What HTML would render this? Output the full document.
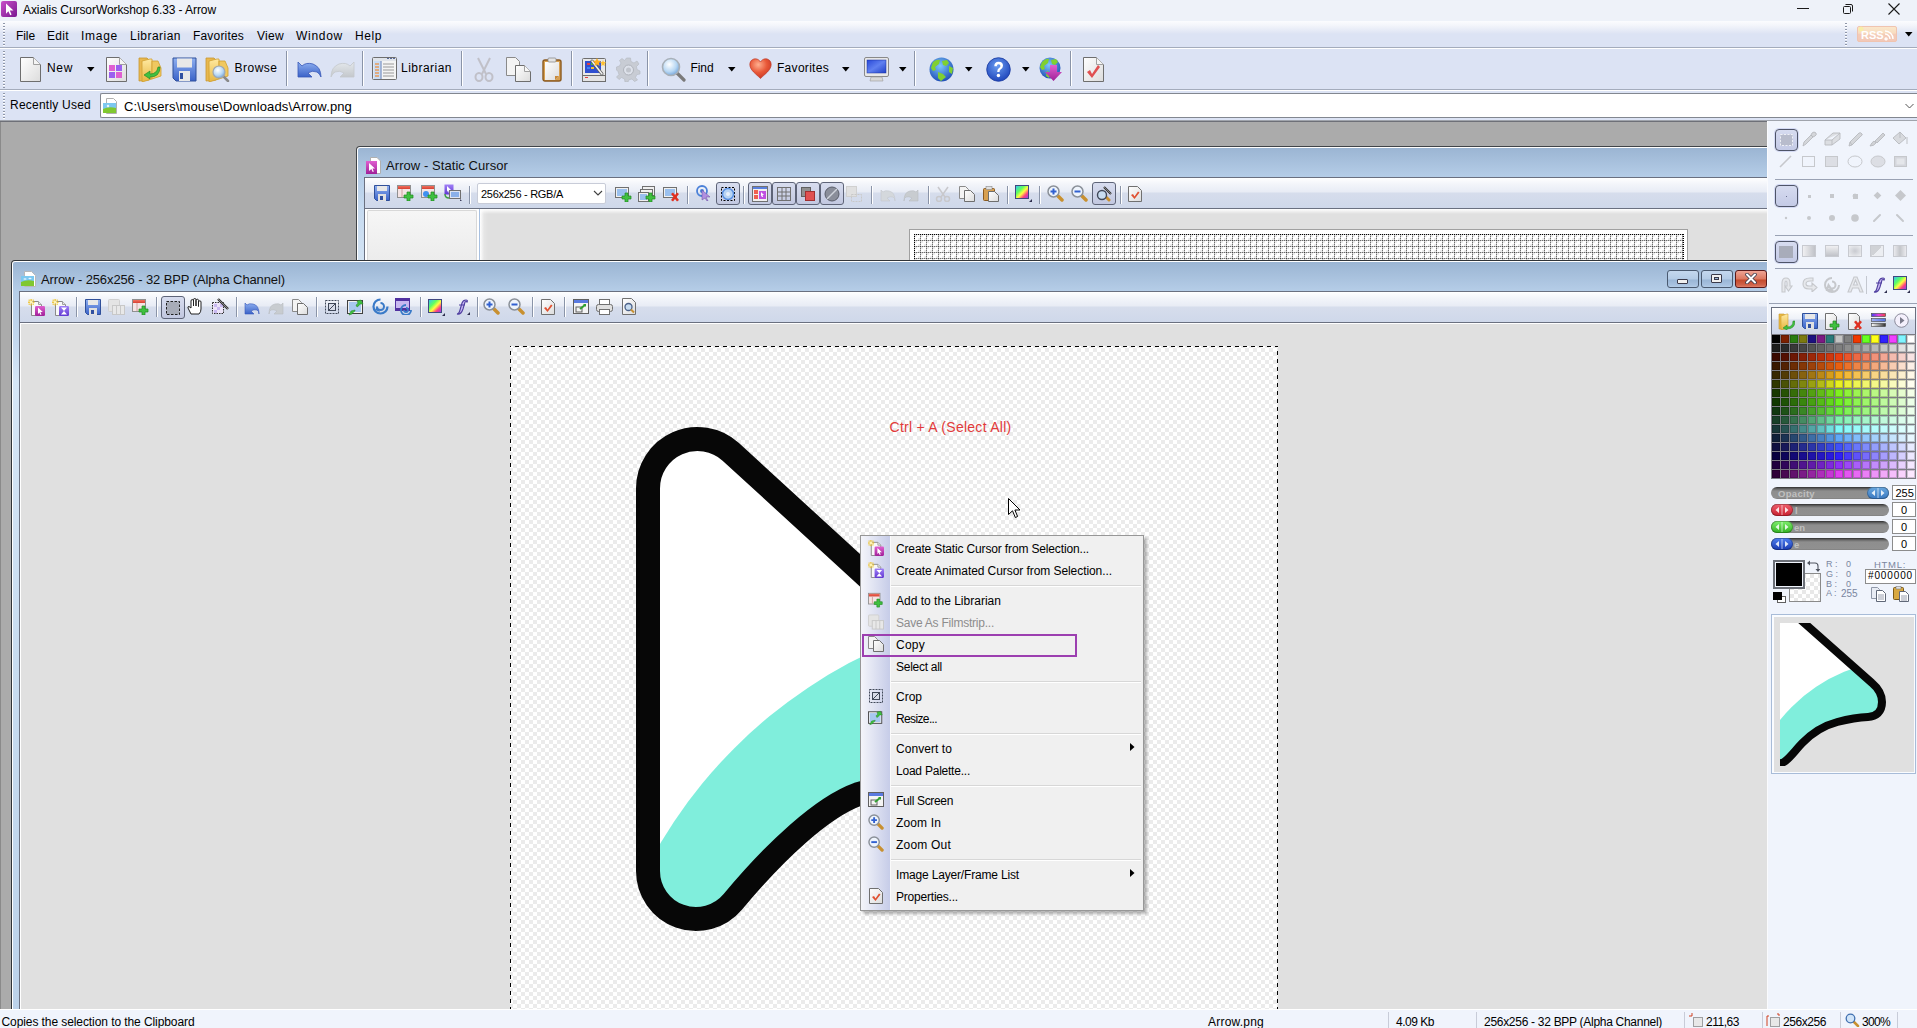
<!DOCTYPE html>
<html><head><meta charset="utf-8"><style>
html,body{margin:0;padding:0;width:1917px;height:1028px;overflow:hidden;background:#ababab;}
body{position:relative;font-family:"Liberation Sans",sans-serif;}
body div, body svg{position:absolute;}
body div div, body div svg{position:absolute;}
</style></head><body>
<svg width="0" height="0" style="position:absolute">
<defs>
<linearGradient id="gPage" x1="0" y1="0" x2="1" y2="1"><stop offset="0" stop-color="#ffffff"/><stop offset="1" stop-color="#dcdcdc"/></linearGradient>
<linearGradient id="gFolder" x1="0" y1="0" x2="0" y2="1"><stop offset="0" stop-color="#ffe9a0"/><stop offset="1" stop-color="#e6b640"/></linearGradient>
<linearGradient id="gBlue" x1="0" y1="0" x2="0" y2="1"><stop offset="0" stop-color="#8fb0f0"/><stop offset="1" stop-color="#3a62c8"/></linearGradient>
<linearGradient id="gGrayArr" x1="0" y1="0" x2="0" y2="1"><stop offset="0" stop-color="#e4e8ec"/><stop offset="1" stop-color="#c4c8cc"/></linearGradient>
<radialGradient id="gLens" cx=".4" cy=".35" r=".7"><stop offset="0" stop-color="#ffffff"/><stop offset=".6" stop-color="#b8d8f4"/><stop offset="1" stop-color="#6ea0d8"/></radialGradient>
<radialGradient id="gHeart" cx=".4" cy=".3" r=".8"><stop offset="0" stop-color="#ffb090"/><stop offset=".5" stop-color="#e85838"/><stop offset="1" stop-color="#c03020"/></radialGradient>
<radialGradient id="gGlobe" cx=".45" cy=".35" r=".7"><stop offset="0" stop-color="#7ec8ff"/><stop offset="1" stop-color="#1a48b0"/></radialGradient>
<radialGradient id="gHelp" cx=".45" cy=".35" r=".7"><stop offset="0" stop-color="#6a9cf0"/><stop offset="1" stop-color="#1a40b8"/></radialGradient>
<linearGradient id="gScreen" x1="0" y1="0" x2="1" y2="1"><stop offset="0" stop-color="#2848d8"/><stop offset=".5" stop-color="#6080f0"/><stop offset="1" stop-color="#2040c8"/></linearGradient>
<linearGradient id="gPurple" x1="0" y1="0" x2="0" y2="1"><stop offset="0" stop-color="#e060d0"/><stop offset="1" stop-color="#a02098"/></linearGradient>
<linearGradient id="gViolet" x1="0" y1="0" x2="0" y2="1"><stop offset="0" stop-color="#a080f8"/><stop offset="1" stop-color="#6038d0"/></linearGradient>
<linearGradient id="gAppIcon" x1="0" y1="0" x2="1" y2="1"><stop offset="0" stop-color="#c850c8"/><stop offset="1" stop-color="#7a1890"/></linearGradient>
<linearGradient id="gRainbow" x1="0" y1="0" x2="1" y2="1"><stop offset="0" stop-color="#30c0ff"/><stop offset=".35" stop-color="#60ff60"/><stop offset=".55" stop-color="#ffff40"/><stop offset=".75" stop-color="#ff4080"/><stop offset="1" stop-color="#8040ff"/></linearGradient>
<linearGradient id="gLibRed" x1="0" y1="0" x2="0" y2="1"><stop offset="0" stop-color="#f07060"/><stop offset="1" stop-color="#d84030"/></linearGradient>
<linearGradient id="gMini" x1="0" y1="0" x2="0" y2="1"><stop offset="0" stop-color="#c4d8ee"/><stop offset=".5" stop-color="#b4cce6"/><stop offset=".5" stop-color="#9ab6d6"/><stop offset="1" stop-color="#bcd2ea"/></linearGradient>
<linearGradient id="gClose" x1="0" y1="0" x2="0" y2="1"><stop offset="0" stop-color="#f0a090"/><stop offset=".5" stop-color="#d86850"/><stop offset=".5" stop-color="#c04428"/><stop offset="1" stop-color="#e08870"/></linearGradient>
<linearGradient id="gSel" x1="0" y1="0" x2="0" y2="1"><stop offset="0" stop-color="#d4d9ec"/><stop offset="1" stop-color="#c0c6e0"/></linearGradient>
</defs></svg>
<div style="left:0px;top:0px;width:1917px;height:21px;background:#eef2f9"></div><svg style="left:1px;top:1px" width="16" height="16" viewBox="0 0 16 16"><rect x="0" y="0" width="16" height="16" rx="2" fill="url(#gAppIcon)"/><path d="M5 2.5L12.5 9.5H8.8L10.6 13.6L9.2 14.3L7.4 10.2L5 12.8Z" fill="#fff"/></svg><div style="left:23px;top:4.09px;font-size:12px;line-height:12px;color:#000;font-weight:400;font-family:'Liberation Sans';letter-spacing:-0.081px;white-space:pre;">Axialis CursorWorkshop 6.33 - Arrow</div><div style="left:1797px;top:8px;width:12px;height:1px;background:#1a1a1a"></div><svg style="left:1842px;top:3px" width="12" height="12" viewBox="0 0 12 12"><rect x="1.5" y="3.5" width="7" height="7" rx="1" fill="none" stroke="#1a1a1a"/><path d="M3.5 1.5H9A1.5 1.5 0 0 1 10.5 3V8.5" fill="none" stroke="#1a1a1a"/></svg><svg style="left:1888px;top:3px" width="12" height="12" viewBox="0 0 12 12"><path d="M.5 .5L11.5 11.5M11.5 .5L.5 11.5" stroke="#1a1a1a" stroke-width="1.1"/></svg><div style="left:0px;top:21px;width:1917px;height:26px;background:linear-gradient(#fbfcfe 0px,#f4f6fb 4px,#e2e7f5 11px,#dce3f4 13px,#dce3f4 26px)"></div><div style="left:0px;top:47px;width:1917px;height:1px;background:#a4acbc"></div><div style="left:0px;top:48px;width:1917px;height:1px;background:#ffffff"></div><div style="left:3px;top:23px;width:2px;height:23px;background:repeating-linear-gradient(#8e96a8 0 1px,#ffffff 1px 2px,transparent 2px 3px)"></div><div style="left:16px;top:29.89px;font-size:12px;line-height:12px;color:#000;font-weight:400;font-family:'Liberation Sans';letter-spacing:-0.086px;white-space:pre;">File</div><div style="left:47px;top:29.89px;font-size:12px;line-height:12px;color:#000;font-weight:400;font-family:'Liberation Sans';letter-spacing:0.328px;white-space:pre;">Edit</div><div style="left:81px;top:29.89px;font-size:12px;line-height:12px;color:#000;font-weight:400;font-family:'Liberation Sans';letter-spacing:0.728px;white-space:pre;">Image</div><div style="left:130px;top:29.89px;font-size:12px;line-height:12px;color:#000;font-weight:400;font-family:'Liberation Sans';letter-spacing:0.477px;white-space:pre;">Librarian</div><div style="left:193px;top:29.89px;font-size:12px;line-height:12px;color:#000;font-weight:400;font-family:'Liberation Sans';letter-spacing:0.182px;white-space:pre;">Favorites</div><div style="left:257px;top:29.89px;font-size:12px;line-height:12px;color:#000;font-weight:400;font-family:'Liberation Sans';letter-spacing:0.301px;white-space:pre;">View</div><div style="left:296px;top:29.89px;font-size:12px;line-height:12px;color:#000;font-weight:400;font-family:'Liberation Sans';letter-spacing:0.719px;white-space:pre;">Window</div><div style="left:355px;top:29.89px;font-size:12px;line-height:12px;color:#000;font-weight:400;font-family:'Liberation Sans';letter-spacing:0.578px;white-space:pre;">Help</div><div style="left:1845px;top:23px;width:2px;height:23px;background:repeating-linear-gradient(#8e96a8 0 1px,#ffffff 1px 2px,transparent 2px 3px)"></div><svg style="left:1856px;top:25px" width="42" height="18" viewBox="0 0 42 18"><defs><linearGradient id="gRss" x1="0" y1="0" x2="0" y2="1"><stop offset="0" stop-color="#fae8cc"/><stop offset=".45" stop-color="#f8dcc0"/><stop offset=".5" stop-color="#f4ccb8"/><stop offset="1" stop-color="#f2c8b8"/></linearGradient></defs><rect x="1.5" y="1.5" width="39" height="15" rx="1.5" fill="url(#gRss)" stroke="#f0c4b0"/><text x="5" y="13.5" font-family="Liberation Sans" font-weight="bold" font-size="11" fill="#ffffff">RSS</text><path d="M30 13a1 1 0 1 0 .1 0M29 9a5 5 0 0 1 5 5M29 6a8 8 0 0 1 8 8" fill="none" stroke="#fff" stroke-width="1.4"/><circle cx="5" cy="4" r="2.5" fill="#f8f0a0" opacity=".8"/></svg><svg style="left:1905px;top:32px" width="8" height="5" viewBox="0 0 8 5"><path d="M0 0H7.5L3.75 4.5Z" fill="#000"/></svg><div style="left:0px;top:49px;width:1917px;height:40px;background:#dce3f4"></div><div style="left:0px;top:89px;width:1917px;height:1px;background:#a4acbc"></div><div style="left:0px;top:90px;width:1917px;height:1px;background:#ffffff"></div><div style="left:3px;top:51px;width:2px;height:37px;background:repeating-linear-gradient(#8e96a8 0 1px,#ffffff 1px 2px,transparent 2px 3px)"></div><svg style="left:20px;top:57px;" width="21.0" height="25.0" viewBox="0 0 21 25"><path d="M.5 .5H13.5L20.5 7.5V24.5H.5Z" fill="url(#gPage)" stroke="#6e6e6e"/><path d="M13.5 .5V7.5H20.5" fill="#f4f4f4" stroke="#a0a0a0"/></svg><div style="left:47px;top:62.39px;font-size:12px;line-height:12px;color:#000;font-weight:400;font-family:'Liberation Sans';letter-spacing:0.661px;white-space:pre;">New</div><svg style="left:86.5px;top:66.5px" width="8" height="5" viewBox="0 0 8 5"><path d="M0 0H7.5L3.75 4.5Z" fill="#000"/></svg><svg style="left:106px;top:57px;" width="21.0" height="25.0" viewBox="0 0 21 25"><path d="M.5 .5H13.5L20.5 7.5V24.5H.5Z" fill="url(#gPage)" stroke="#6e6e6e"/><path d="M13.5 .5V7.5H20.5" fill="#f4f4f4" stroke="#a0a0a0"/><rect x="3" y="8" width="6" height="6" fill="#e060d0"/><rect x="10" y="8" width="6" height="6" fill="#9a60f0"/><rect x="3" y="15" width="6" height="6" fill="#9a60f0"/><rect x="10" y="15" width="6" height="6" fill="#e060d0"/></svg><svg style="left:138px;top:57px;" width="24.0" height="25.0" viewBox="0 0 24 25"><path d="M1 1H9L11 3V23L1 24Z" fill="#e8b850" stroke="#c89830" stroke-width=".8"/><path d="M4 4L12 2H14V22L4 25Z" fill="url(#gFolder)" stroke="#d0a030" stroke-width=".8"/><path d="M14 4H20L23 11V19L14 22Z" fill="#f0c860" stroke="#d0a030" stroke-width=".8"/><path d="M20 10Q19 17 12 17L12 14L6 18L12 22L12 20Q22 20 22 10Z" fill="#40c040" stroke="#208020" stroke-width=".6"/></svg><svg style="left:172px;top:57px;" width="25.0" height="25.0" viewBox="0 0 25 25"><path d="M1 1H24V24H4L1 21Z" fill="url(#gBlue)" stroke="#30509a"/><rect x="5" y="1.5" width="15" height="9" fill="#e8e8e8"/><rect x="7" y="14" width="11" height="10" fill="#e8e8e8"/><rect x="8" y="16" width="3" height="6" fill="#3050a0"/></svg><svg style="left:205px;top:57px;" width="25.0" height="25.0" viewBox="0 0 25 25"><path d="M1 1H9L11 3V23L1 24Z" fill="#e8b850" stroke="#c89830" stroke-width=".8"/><path d="M4 4L12 2H14V22L4 25Z" fill="url(#gFolder)" stroke="#d0a030" stroke-width=".8"/><path d="M14 4H20L23 11V19L14 22Z" fill="#f0c860" stroke="#d0a030" stroke-width=".8"/><line x1="18" y1="19" x2="23" y2="24" stroke="#8a8a8a" stroke-width="2.5" stroke-linecap="round"/><circle cx="14" cy="15" r="6" fill="url(#gLens)" stroke="#a0a8b0" stroke-width="1.2"/></svg><div style="left:234.5px;top:62.39px;font-size:12px;line-height:12px;color:#000;font-weight:400;font-family:'Liberation Sans';letter-spacing:0.497px;white-space:pre;">Browse</div><div style="left:286px;top:51px;width:1px;height:35px;background:#8a94a8"></div><div style="left:287px;top:51px;width:1px;height:35px;background:#ffffff"></div><svg style="left:297px;top:61px;" width="25.0" height="17.0" viewBox="0 0 25 17"><path d="M1 1V16H15L11 12Q15 9 20 11Q23 13 24 16Q24 6 16 3Q9 1 5 5Z" fill="url(#gBlue)" stroke="#3858b8" stroke-width=".8"/></svg><svg style="left:330px;top:61px;" width="25.0" height="17.0" viewBox="0 0 25 17"><path d="M24 1V16H10L14 12Q10 9 5 11Q2 13 1 16Q1 6 9 3Q16 1 20 5Z" fill="url(#gGrayArr)" stroke="#c4c8cc" stroke-width=".8"/></svg><div style="left:362px;top:51px;width:1px;height:35px;background:#8a94a8"></div><div style="left:363px;top:51px;width:1px;height:35px;background:#ffffff"></div><svg style="left:372px;top:57px;" width="25.0" height="23.0" viewBox="0 0 25 23"><rect x=".5" y=".5" width="24" height="22" rx="1" fill="#f4f4f4" stroke="#6e6e6e"/><rect x="1" y="1" width="23" height="3" fill="#e0e4ea"/><rect x="18" y="1" width="2" height="1" fill="#5a6a9a"/><rect x="21" y="1" width="2" height="1" fill="#5a6a9a"/><rect x="15" y="1" width="2" height="1" fill="#5a6a9a"/><rect x="1.5" y="4" width="7" height="18" fill="#c8dcf4"/><line x1="9" y1="4" x2="9" y2="22" stroke="#5a7ab8"/><g stroke="#f08a30" stroke-width="1.2"><line x1="3" y1="7" x2="7" y2="7"/><line x1="3" y1="10" x2="7" y2="10"/><line x1="3" y1="13" x2="7" y2="13"/><line x1="3" y1="16" x2="7" y2="16"/><line x1="3" y1="19" x2="7" y2="19"/></g><g stroke="#9a9a9a" stroke-width="1"><line x1="11" y1="7" x2="22" y2="7"/><line x1="11" y1="10" x2="22" y2="10"/><line x1="11" y1="13" x2="22" y2="13"/><line x1="11" y1="16" x2="22" y2="16"/><line x1="11" y1="19" x2="22" y2="19"/></g></svg><div style="left:401px;top:62.39px;font-size:12px;line-height:12px;color:#000;font-weight:400;font-family:'Liberation Sans';letter-spacing:0.477px;white-space:pre;">Librarian</div><div style="left:461px;top:51px;width:1px;height:35px;background:#8a94a8"></div><div style="left:462px;top:51px;width:1px;height:35px;background:#ffffff"></div><svg style="left:474px;top:57px;" width="20.0" height="25.0" viewBox="0 0 20 25"><g fill="none" stroke="#c0c0c8" stroke-width="2"><line x1="4" y1="1" x2="12" y2="17"/><line x1="16" y1="1" x2="8" y2="17"/><ellipse cx="5" cy="20" rx="3.5" ry="4"/><ellipse cx="15" cy="20" rx="3.5" ry="4"/></g></svg><svg style="left:506px;top:57px;" width="25.0" height="25.0" viewBox="0 0 25 25"><path d="M.5 .5H9.5L13.5 4.5V18.5H.5Z" fill="#f4f4f4" stroke="#8a8a8a"/><path d="M9.5 8.5H18.5L24.5 14.5V24.5H9.5Z" fill="url(#gPage)" stroke="#6e6e6e"/><path d="M18.5 8.5V14.5H24.5" fill="#f8f8f8" stroke="#a0a0a0"/></svg><svg style="left:542px;top:57px;" width="20.0" height="25.0" viewBox="0 0 20 25"><rect x="1" y="3" width="18" height="21" rx="2" fill="#d8a050" stroke="#8a5a20" stroke-width="1.4"/><path d="M3 5H17V19L13 23H3Z" fill="url(#gPage)"/><path d="M13 23V19H17" fill="#c88838"/><rect x="6" y="1" width="8" height="4" rx="1" fill="#e4e4e4" stroke="#8a8a8a" stroke-width=".8"/></svg><div style="left:571px;top:51px;width:1px;height:35px;background:#8a94a8"></div><div style="left:572px;top:51px;width:1px;height:35px;background:#ffffff"></div><svg style="left:582px;top:57px;" width="25.0" height="25.0" viewBox="0 0 25 25"><rect x=".5" y="1.5" width="23" height="21" rx="1" fill="#e8e8e8" stroke="#6e6e6e"/><rect x="3" y="4" width="16" height="12" fill="#3050d0"/><rect x="5" y="6" width="3" height="2" fill="#e04040"/><rect x="9" y="6" width="3" height="2" fill="#40c040"/><rect x="5" y="10" width="3" height="2" fill="#4080f0"/><rect x="9" y="10" width="3" height="2" fill="#f0c030"/><rect x=".5" y="18.5" width="23" height="6" fill="#e4e4e4" stroke="#6e6e6e"/><rect x="3" y="20" width="3" height="1" fill="#e04040"/><line x1="10" y1="4" x2="20" y2="17" stroke="#606060" stroke-width="3" stroke-linecap="round"/><line x1="10" y1="4" x2="20" y2="17" stroke="#f0f0f0" stroke-width="1.5" stroke-linecap="round"/><path d="M15 1L16.2 3.6L19 4L17 6L17.5 9L15 7.6L12.5 9L13 6L11 4L13.8 3.6Z" fill="#ffb020"/><path d="M21 3L21.8 5L24 5.3L22.4 6.8L22.8 9L21 8L19.2 9L19.6 6.8L18 5.3L20.2 5Z" fill="#ffc030"/></svg><svg style="left:616px;top:57px;" width="25.0" height="25.0" viewBox="0 0 25 25"><path d="M10.5 1H14.5L15 4.5L18 6L21 4L23 7L20.5 9.5L21 12.5L24 14V17L20.8 17.6L19.5 20.5L21.5 23L18.5 24.5L16 22L13 22.7L12 25H9L8.5 22L5.5 20.5L3 22.5L.5 20L3 17.5L2 14.5L.5 13V10L3.5 9L5 6L3.5 3.5L6 1.5L8.5 3.5Z" fill="#c8ccd4" stroke="#b4b8c0" stroke-width=".6"/><circle cx="12.5" cy="13" r="5" fill="#dde1ea" stroke="#b0b4bc"/><circle cx="12.5" cy="13" r="2.5" fill="#c0c4cc"/></svg><div style="left:647px;top:51px;width:1px;height:35px;background:#8a94a8"></div><div style="left:648px;top:51px;width:1px;height:35px;background:#ffffff"></div><svg style="left:661px;top:57px;" width="25.0" height="25.0" viewBox="0 0 25 25"><line x1="16" y1="16" x2="23" y2="23" stroke="#7a7a7a" stroke-width="3.2" stroke-linecap="round"/><circle cx="10" cy="10" r="8.5" fill="url(#gLens)" stroke="#a8b0b8" stroke-width="1.6"/></svg><div style="left:690.5px;top:62.39px;font-size:12px;line-height:12px;color:#000;font-weight:400;font-family:'Liberation Sans';letter-spacing:-0.086px;white-space:pre;">Find</div><svg style="left:727.5px;top:66.5px" width="8" height="5" viewBox="0 0 8 5"><path d="M0 0H7.5L3.75 4.5Z" fill="#000"/></svg><svg style="left:749px;top:58px;" width="23.0" height="21.0" viewBox="0 0 23 21"><path d="M11.5 20.5C7 16 .8 12 .8 6.5C.8 3 3.5 .8 6.3 .8C8.8 .8 10.5 2.3 11.5 4C12.5 2.3 14.2 .8 16.7 .8C19.5 .8 22.2 3 22.2 6.5C22.2 12 16 16 11.5 20.5Z" fill="url(#gHeart)" stroke="#b83020" stroke-width=".6"/></svg><div style="left:777px;top:62.39px;font-size:12px;line-height:12px;color:#000;font-weight:400;font-family:'Liberation Sans';letter-spacing:0.293px;white-space:pre;">Favorites</div><svg style="left:842px;top:66.5px" width="8" height="5" viewBox="0 0 8 5"><path d="M0 0H7.5L3.75 4.5Z" fill="#000"/></svg><svg style="left:864px;top:57px;" width="25.0" height="25.0" viewBox="0 0 25 25"><rect x=".5" y=".5" width="24" height="19" rx="1.5" fill="#e8e8e8" stroke="#8a8a8a"/><rect x="3" y="3" width="19" height="13" fill="url(#gScreen)" stroke="#1a30a0" stroke-width=".5"/><path d="M7 20H18L19 24H6Z" fill="#d8d8d8" stroke="#9a9a9a" stroke-width=".6"/></svg><svg style="left:899px;top:66.5px" width="8" height="5" viewBox="0 0 8 5"><path d="M0 0H7.5L3.75 4.5Z" fill="#000"/></svg><div style="left:914px;top:51px;width:1px;height:35px;background:#8a94a8"></div><div style="left:915px;top:51px;width:1px;height:35px;background:#ffffff"></div><svg style="left:929px;top:57px;" width="25.0" height="25.0" viewBox="0 0 25 25"><circle cx="12.5" cy="12.5" r="12" fill="url(#gGlobe)"/><path d="M4 5Q8 2 11 3L10 7L6 10L7 13L4 14L2 11Z M13 4L18 3L20 6L17 9L14 8Z M20 9L24 11L23 17L20 15Z M9 15L14 17L17 20L12 24L9 21Z" fill="#80d030"/></svg><svg style="left:965px;top:66.5px" width="8" height="5" viewBox="0 0 8 5"><path d="M0 0H7.5L3.75 4.5Z" fill="#000"/></svg><svg style="left:986px;top:57px;" width="25.0" height="25.0" viewBox="0 0 25 25"><circle cx="12.5" cy="12.5" r="11.8" fill="url(#gHelp)" stroke="#1838a0" stroke-width=".8"/><path d="M8.3 9.3Q8.3 4.8 12.6 4.8Q17 4.8 17 8.8Q17 11 14.5 12.4Q13.5 13 13.5 15H11.2Q11.2 12 13 11Q14.4 10.2 14.4 8.9Q14.4 7.2 12.6 7.2Q10.8 7.2 10.8 9.3Z" fill="#fff"/><circle cx="12.4" cy="18.5" r="1.7" fill="#fff"/></svg><svg style="left:1022px;top:66.5px" width="8" height="5" viewBox="0 0 8 5"><path d="M0 0H7.5L3.75 4.5Z" fill="#000"/></svg><svg style="left:1039px;top:57px;" width="25.0" height="25.0" viewBox="0 0 25 25"><circle cx="11" cy="11" r="10.5" fill="url(#gGlobe)"/><path d="M3 5Q7 1 10 2L9 6L5 9L6 12L3 13L1 10Z M12 3L17 2L19 5L16 8L13 7Z M8 14L12 16L10 21L7 19Z" fill="#80d030"/><path d="M11 8H18V15H23L14.5 24L6 15H11Z" fill="url(#gPurple)"/></svg><div style="left:1070px;top:51px;width:1px;height:35px;background:#8a94a8"></div><div style="left:1071px;top:51px;width:1px;height:35px;background:#ffffff"></div><svg style="left:1083px;top:57px;" width="21.0" height="25.0" viewBox="0 0 21 25"><path d="M.5 .5H13.5L20.5 7.5V24.5H.5Z" fill="url(#gPage)" stroke="#6e6e6e"/><path d="M13.5 .5V7.5H20.5" fill="#f4f4f4" stroke="#a0a0a0"/><path d="M4 15L7 13L9 17L15 8L17 10L9 21Z" fill="#e05050"/></svg><div style="left:0px;top:91px;width:1917px;height:29px;background:#dce3f4"></div><div style="left:3px;top:93px;width:2px;height:26px;background:repeating-linear-gradient(#8e96a8 0 1px,#ffffff 1px 2px,transparent 2px 3px)"></div><div style="left:10px;top:99.19px;font-size:12px;line-height:12px;color:#000;font-weight:400;font-family:'Liberation Sans';letter-spacing:0.227px;white-space:pre;">Recently Used</div><div style="left:100px;top:93px;width:1817px;height:25px;background:#fff;border:1px solid #828790;border-right:none;border-radius:2px 0 0 2px;box-sizing:border-box"></div><svg style="left:103px;top:98px" width="15" height="16" viewBox="0 0 15 16"><path d="M3.5 .5H10.5L13.5 3.5V15.5H3.5Z" fill="#fff" stroke="#b0b0b0"/><rect x="0" y="5" width="13" height="10" fill="#7cc8f0"/><path d="M0 11Q6 8 13 10V15H0Z" fill="#80c830"/><circle cx="5" cy="8" r="1.2" fill="#e8f4ff"/></svg><div style="left:124px;top:99.87px;font-size:13px;line-height:13px;color:#000;font-weight:400;font-family:'Liberation Sans';letter-spacing:0.139px;white-space:pre;">C:\Users\mouse\Downloads\Arrow.png</div><svg style="left:1905px;top:103px" width="9" height="6" viewBox="0 0 9 6"><path d="M.5 1L4.5 5L8.5 1" fill="none" stroke="#555" stroke-width="1"/></svg><div style="left:0px;top:120px;width:1917px;height:1px;background:#a0a4ac"></div><div style="left:0px;top:121px;width:1917px;height:1px;background:#6e7078"></div><div style="left:0px;top:122px;width:1768px;height:888px;background:#ababab"></div><div style="left:0px;top:122px;width:1px;height:888px;background:#8a8a8a"></div><div style="left:356px;top:146px;width:1412px;height:114px;background:#404448;border-radius:4px 0 0 0"></div><div style="left:357px;top:147px;width:1411px;height:113px;background:#ffffff;border-radius:3px 0 0 0"></div><div style="left:358px;top:148px;width:1410px;height:112px;background:linear-gradient(#9bb5d3 0px,#b6cee8 30px,#c6daf0 60px,#d4e4f4 114px);border-radius:2px 0 0 0"></div><svg style="left:366px;top:157px" width="15" height="17" viewBox="0 0 15 17"><path d="M4.5 .5H11L14.5 4V16.5H4.5Z" fill="#fff" stroke="#b0b0b0"/><rect x="0" y="4" width="11" height="13" fill="url(#gPurple)"/><path d="M3 6L9 11.5H6.5L7.8 14.5L6.7 15L5.4 12L3 14Z" fill="#fff"/></svg><div style="left:386px;top:159.37px;font-size:13px;line-height:13px;color:#111;font-weight:400;font-family:'Liberation Sans';letter-spacing:0.065px;white-space:pre;">Arrow - Static Cursor</div><div style="left:364px;top:177px;width:1404px;height:83px;background:#6a7080"></div><div style="left:365px;top:178px;width:1403px;height:30px;background:linear-gradient(#ffffff 0px,#f3f5fa 6px,#e8ecf5 14px,#d6ddec 15px,#cfd8ea 30px)"></div><div style="left:365px;top:208px;width:1403px;height:1px;background:#6a7080"></div><div style="left:365px;top:209px;width:1403px;height:51px;background:#ffffff"></div><div style="left:367px;top:210px;width:110px;height:50px;background:linear-gradient(#f6f6f6,#ececec);border:1px solid #d8d8d8;border-bottom:none;box-sizing:border-box;border-radius:2px 2px 0 0"></div><div style="left:479px;top:209px;width:1px;height:51px;background:#a8c0e0"></div><div style="left:480px;top:209px;width:1288px;height:51px;background:linear-gradient(90deg,#ffffff 0px,#e6e6e6 4px,#e0e0e0 8px)"></div><div style="left:480px;top:209px;width:1288px;height:5px;background:linear-gradient(#ffffff,rgba(224,224,224,0))"></div><div style="left:909px;top:229px;width:779px;height:31px;background:#ffffff;border:1px solid #a0a0a0;border-bottom:none;box-sizing:border-box"></div><svg style="left:914px;top:234px" width="770" height="26" viewBox="0 0 770 26"><defs><pattern id="pGrid" width="6" height="6" patternUnits="userSpaceOnUse"><rect width="6" height="6" fill="#fff"/><rect x="1" y="1" width="2" height="2" fill="#ececec"/><rect x="4" y="4" width="2" height="2" fill="#ececec"/><rect x="0" y="0" width="1" height="6" fill="#c4c4c4"/><rect x="0" y="0" width="6" height="1" fill="#c4c4c4"/><rect x="0" y="0" width="1" height="1" fill="#404040"/><rect x="0" y="2" width="1" height="1" fill="#707070"/><rect x="0" y="4" width="1" height="1" fill="#707070"/><rect x="2" y="0" width="1" height="1" fill="#707070"/><rect x="4" y="0" width="1" height="1" fill="#707070"/></pattern></defs><rect width="770" height="26" fill="url(#pGrid)"/><g fill="#000"><rect x="0" y="0" width="770" height="1" fill="url(#pDots)"/></g></svg><div style="left:914px;top:234px;width:770px;height:1px;background-image:linear-gradient(90deg,#000 50%,transparent 50%);background-size:2px 1px"></div><div style="left:914px;top:234px;width:1px;height:26px;background-image:linear-gradient(#000 50%,transparent 50%);background-size:1px 2px"></div><div style="left:1683px;top:234px;width:1px;height:26px;background-image:linear-gradient(#000 50%,transparent 50%);background-size:1px 2px"></div><svg style="left:374px;top:185px;" width="16.0" height="16.0" viewBox="0 0 16 16"><path d="M.5 .5H15.5V15.5H2.5L.5 13.5Z" fill="url(#gBlue)" stroke="#30509a"/><rect x="3" y="1" width="10" height="5" fill="#e8e8e8"/><rect x="4" y="9" width="8" height="7" fill="#e0e0e0"/><rect x="6" y="11" width="3" height="4" fill="#3050a0"/></svg><svg style="left:397px;top:185px;" width="18.0" height="16.0" viewBox="0 0 18 16"><rect x=".5" y=".5" width="13" height="12" fill="#f4e4e4" stroke="#909090"/><rect x="1" y="1" width="12" height="3" fill="url(#gLibRed)"/><line x1="5" y1="4" x2="5" y2="12" stroke="#d0a0a0"/><path d="M10 7H13V10H16V13H13V16H10V13H7V10H10Z" fill="#40c040" stroke="#208a20" stroke-width=".7"/></svg><svg style="left:421px;top:185px;" width="18.0" height="16.0" viewBox="0 0 18 16"><rect x=".5" y=".5" width="13" height="12" fill="#f4e4e4" stroke="#909090"/><rect x="1" y="1" width="12" height="3" fill="url(#gLibRed)"/><circle cx="5" cy="9" r="3" fill="#4090f0"/><path d="M10 7H13V10H16V13H13V16H10V13H7V10H10Z" fill="#40c040" stroke="#208a20" stroke-width=".7"/></svg><svg style="left:444px;top:184px;" width="18.0" height="17.0" viewBox="0 0 18 17"><rect x=".5" y=".5" width="9" height="10" fill="url(#gViolet)"/><path d="M3 2L7 6H5L6 9L5 9.5L4 6.5L3 8Z" fill="#fff"/><rect x="5.5" y="6.5" width="11" height="8" fill="#dde4f0" stroke="#707070"/><rect x="7" y="8" width="8" height="5" fill="#8ab0e8"/><path d="M1 10Q1 14 5 14" fill="none" stroke="#40a040" stroke-width="1.5"/><path d="M16 15L18 17H16Z" fill="#404060"/></svg><div style="left:469px;top:186px;width:1px;height:18px;background:#8a94a8"></div><div style="left:470px;top:186px;width:1px;height:18px;background:#ffffff"></div><div style="left:477px;top:183px;width:129px;height:21px;background:#fff;border:1px solid #c8ccd8;border-radius:2px;box-sizing:border-box"></div><div style="left:481px;top:189.01px;font-size:11px;line-height:11px;color:#000;font-weight:400;font-family:'Liberation Sans';letter-spacing:-0.281px;white-space:pre;">256x256 - RGB/A</div><svg style="left:593px;top:190px" width="10" height="6" viewBox="0 0 10 6"><path d="M1 1L5 5L9 1" fill="none" stroke="#404040" stroke-width="1.1"/></svg><svg style="left:615px;top:186px;" width="17.0" height="16.0" viewBox="0 0 17 16"><rect x=".5" y="1.5" width="13" height="10" fill="#f0f0f0" stroke="#707070"/><rect x="2" y="3" width="10" height="7" fill="#9ac0ee"/><path d="M10 7H13V10H16V13H13V16H10V13H7V10H10Z" fill="#40c040" stroke="#208a20" stroke-width=".7"/></svg><svg style="left:638px;top:186px;" width="18.0" height="16.0" viewBox="0 0 18 16"><rect x="4.5" y=".5" width="12" height="9" fill="#f0f0f0" stroke="#707070"/><rect x="2.5" y="3.5" width="12" height="9" fill="#f0f0f0" stroke="#707070"/><rect x=".5" y="6.5" width="10" height="9" fill="#f0f0f0" stroke="#707070"/><rect x="2" y="8" width="7" height="6" fill="#9ac0ee"/><path d="M11 7H14V10H17V13H14V16H11V13H8V10H11Z" fill="#40c040" stroke="#208a20" stroke-width=".7"/></svg><svg style="left:663px;top:186px;" width="17.0" height="16.0" viewBox="0 0 17 16"><rect x=".5" y="1.5" width="13" height="10" fill="#f0f0f0" stroke="#707070"/><rect x="2" y="3" width="10" height="7" fill="#9ac0ee"/><path d="M8 8L10 6.5L12 9L14 6.5L16 8L13.5 11L16 14L14 15.5L12 13L10 15.5L8 14L10.5 11Z" fill="#e03020"/></svg><div style="left:687px;top:186px;width:1px;height:18px;background:#8a94a8"></div><div style="left:688px;top:186px;width:1px;height:18px;background:#ffffff"></div><svg style="left:696px;top:185px;" width="15.0" height="16.0" viewBox="0 0 15 16"><circle cx="6" cy="6" r="5" fill="none" stroke="#4a80d8" stroke-width="1.8"/><circle cx="6" cy="6" r="2" fill="#4a80d8"/><path d="M6 5L14 12L10 12L12 16L11 16L9 13L6 15Z" fill="#b090e0" stroke="#6a4aa0" stroke-width=".5"/></svg><div style="left:716px;top:182px;width:24px;height:23px;background:linear-gradient(#d8ddef,#c2c8e0);border:1px solid #5e6478;border-radius:3px;box-sizing:border-box"></div><svg style="left:720px;top:186px;" width="16.0" height="16.0" viewBox="0 0 16 16"><rect x="1.5" y="1.5" width="13" height="13" fill="none" stroke="#000" stroke-dasharray="2 1.5"/><circle cx="8" cy="8" r="5.5" fill="#b8d4f4" stroke="#5a90e0" stroke-width="1.5"/><circle cx="8" cy="8" r="2" fill="#e8f0fa"/></svg><div style="left:743px;top:186px;width:1px;height:18px;background:#8a94a8"></div><div style="left:744px;top:186px;width:1px;height:18px;background:#ffffff"></div><div style="left:748px;top:182px;width:24px;height:23px;background:linear-gradient(#d8ddef,#c2c8e0);border:1px solid #5e6478;border-radius:3px;box-sizing:border-box"></div><svg style="left:752px;top:186px;" width="16.0" height="16.0" viewBox="0 0 16 16"><rect x=".5" y=".5" width="15" height="15" fill="#f0f0f0" stroke="#707070"/><rect x="1" y="1" width="14" height="2" fill="#5a80e0"/><rect x="2" y="4" width="4" height="4" fill="#f06050"/><rect x="2" y="9" width="4" height="4" fill="#f06050"/><rect x="7" y="5" width="7" height="8" fill="#c050e0"/><path d="M9 6L12 9H10.5L11 11L10 11L9.5 9.5L9 11Z" fill="#fff"/></svg><div style="left:772px;top:182px;width:24px;height:23px;background:linear-gradient(#d8ddef,#c2c8e0);border:1px solid #5e6478;border-radius:3px;box-sizing:border-box"></div><svg style="left:776px;top:186px;" width="16.0" height="16.0" viewBox="0 0 16 16"><g stroke="#707070" stroke-width="1"><rect x="1.5" y="1.5" width="13" height="13" fill="none"/><line x1="6" y1="1.5" x2="6" y2="14.5"/><line x1="10" y1="1.5" x2="10" y2="14.5"/><line x1="1.5" y1="6" x2="14.5" y2="6"/><line x1="1.5" y1="10" x2="14.5" y2="10"/></g></svg><div style="left:796px;top:182px;width:24px;height:23px;background:linear-gradient(#d8ddef,#c2c8e0);border:1px solid #5e6478;border-radius:3px;box-sizing:border-box"></div><svg style="left:800px;top:186px;" width="16.0" height="16.0" viewBox="0 0 16 16"><rect x="1.5" y="1.5" width="9" height="9" fill="#909090" stroke="#606060"/><rect x="5.5" y="5.5" width="9" height="9" fill="#e05050" stroke="#a03030"/></svg><div style="left:820px;top:182px;width:24px;height:23px;background:linear-gradient(#d8ddef,#c2c8e0);border:1px solid #5e6478;border-radius:3px;box-sizing:border-box"></div><svg style="left:824px;top:186px;" width="16.0" height="16.0" viewBox="0 0 16 16"><circle cx="8" cy="8" r="7" fill="#8a8e9a" stroke="#5a5e6a"/><line x1="3" y1="13" x2="13" y2="3" stroke="#d0d4dc" stroke-width="1.5"/></svg><svg style="left:846px;top:186px;" width="16.0" height="16.0" viewBox="0 0 16 16"><rect x=".5" y=".5" width="10" height="10" fill="#e0e0e0" stroke="#d0d0d0"/><rect x="5.5" y="8.5" width="10" height="7" fill="none" stroke="#c8c8c8" stroke-dasharray="2 1"/></svg><div style="left:871px;top:186px;width:1px;height:18px;background:#8a94a8"></div><div style="left:872px;top:186px;width:1px;height:18px;background:#ffffff"></div><svg style="left:880px;top:187px;" width="16.0" height="16.0" viewBox="0 0 16 16"><path d="M1 3V14H10L7 11Q10 9 13 10Q15 11 15 14Q15 5 9 4Q5 3 3 5Z" fill="#d4d8dc" stroke="#c4c8cc" stroke-width=".6"/></svg><svg style="left:903px;top:187px;" width="16.0" height="16.0" viewBox="0 0 16 16"><path d="M15 3V14H6L9 11Q6 9 3 10Q1 11 1 14Q1 5 7 4Q11 3 13 5Z" fill="#c8ccd0" stroke="#b8bcc0" stroke-width=".6"/></svg><div style="left:928px;top:186px;width:1px;height:18px;background:#8a94a8"></div><div style="left:929px;top:186px;width:1px;height:18px;background:#ffffff"></div><svg style="left:935px;top:186px;" width="16.0" height="16.0" viewBox="0 0 16 16"><g fill="none" stroke="#c8c8cc" stroke-width="1.5"><line x1="3" y1="1" x2="10" y2="11"/><line x1="13" y1="1" x2="6" y2="11"/><circle cx="4" cy="13" r="2.5"/><circle cx="12" cy="13" r="2.5"/></g></svg><svg style="left:959px;top:186px;" width="16.0" height="16.0" viewBox="0 0 16 16"><path d="M.5 .5H6.5L9.5 3.5V12.5H.5Z" fill="#f4f4f4" stroke="#8a8a8a"/><path d="M5.5 4.5H11.5L15.5 8.5V15.5H5.5Z" fill="url(#gPage)" stroke="#6e6e6e"/></svg><svg style="left:983px;top:186px;" width="16.0" height="16.0" viewBox="0 0 16 16"><rect x=".5" y="2.5" width="11" height="12" rx="1" fill="#d8a050" stroke="#8a5a20"/><rect x="3" y=".5" width="6" height="3" fill="#e0e0e0" stroke="#8a8a8a" stroke-width=".6"/><path d="M5.5 5.5H11.5L15.5 9.5V15.5H5.5Z" fill="url(#gPage)" stroke="#6e6e6e"/></svg><div style="left:1007px;top:186px;width:1px;height:18px;background:#8a94a8"></div><div style="left:1008px;top:186px;width:1px;height:18px;background:#ffffff"></div><svg style="left:1015px;top:185px;" width="17.0" height="17.0" viewBox="0 0 17 17"><rect x=".5" y=".5" width="13" height="13" fill="url(#gRainbow)" stroke="#404880"/><path d="M14 17L17 14V17Z" fill="#303050"/></svg><div style="left:1039px;top:186px;width:1px;height:18px;background:#8a94a8"></div><div style="left:1040px;top:186px;width:1px;height:18px;background:#ffffff"></div><svg style="left:1047px;top:185px;" width="17.0" height="17.0" viewBox="0 0 17 17"><line x1="10" y1="10" x2="15" y2="15" stroke="#c89030" stroke-width="3.5" stroke-linecap="round"/><circle cx="6.5" cy="6.5" r="5.5" fill="#eef4fc" stroke="#8a9098" stroke-width="1.5"/><path d="M5.5 3.5H7.5V5.5H9.5V7.5H7.5V9.5H5.5V7.5H3.5V5.5H5.5Z" fill="#3060d0"/></svg><svg style="left:1071px;top:185px;" width="17.0" height="17.0" viewBox="0 0 17 17"><line x1="10" y1="10" x2="15" y2="15" stroke="#c89030" stroke-width="3.5" stroke-linecap="round"/><circle cx="6.5" cy="6.5" r="5.5" fill="#eef4fc" stroke="#8a9098" stroke-width="1.5"/><rect x="3.5" y="5.5" width="6" height="2" fill="#3060d0"/></svg><div style="left:1092px;top:182px;width:24px;height:23px;background:linear-gradient(#d8ddef,#c2c8e0);border:1px solid #5e6478;border-radius:3px;box-sizing:border-box"></div><svg style="left:1096px;top:186px;" width="16.0" height="16.0" viewBox="0 0 16 16"><line x1="9" y1="10" x2="13" y2="14" stroke="#c89030" stroke-width="3" stroke-linecap="round"/><circle cx="6" cy="9" r="4.5" fill="#c8dcf0" stroke="#404858" stroke-width="1.4"/><line x1="8" y1="1" x2="15" y2="8" stroke="#303030" stroke-width="2.2"/><line x1="8" y1="1" x2="15" y2="8" stroke="#909090" stroke-width=".8"/></svg><div style="left:1120px;top:186px;width:1px;height:18px;background:#8a94a8"></div><div style="left:1121px;top:186px;width:1px;height:18px;background:#ffffff"></div><svg style="left:1127px;top:186px;" width="16.0" height="16.0" viewBox="0 0 16 16"><path d="M1.5 .5H10.5L14.5 4.5V15.5H1.5Z" fill="url(#gPage)" stroke="#707070"/><path d="M4 9L6 8L7.5 10.5L11 5.5L12.5 6.5L7.5 13Z" fill="#e05030"/></svg><div style="left:11px;top:260px;width:1757px;height:750px;background:#303438;border-radius:4px 0 0 0"></div><div style="left:12px;top:261px;width:1756px;height:749px;background:#ffffff;border-radius:3px 0 0 0"></div><div style="left:13px;top:262px;width:1755px;height:748px;background:linear-gradient(#9bb5d3 0px,#b6cee8 30px,#c4d8ee 80px,#d6e6f6 120px,#c8dcf0 400px,#bcd2ea 750px);border-radius:2px 0 0 0"></div><svg style="left:21px;top:271px" width="15" height="16" viewBox="0 0 15 16"><path d="M3.5 .5H10.5L14.5 4.5V15.5H3.5Z" fill="#fff" stroke="#b8b8b8"/><rect x="0" y="5" width="13" height="10" fill="#7cc8f0"/><path d="M0 11Q6 8 13 10V15H0Z" fill="#80c830"/><ellipse cx="4" cy="8" rx="1.6" ry=".8" fill="#e8f4ff"/><ellipse cx="9" cy="7.5" rx="1.6" ry=".8" fill="#e8f4ff"/></svg><div style="left:41px;top:273.27px;font-size:13px;line-height:13px;color:#111;font-weight:400;font-family:'Liberation Sans';letter-spacing:-0.109px;white-space:pre;">Arrow - 256x256 - 32 BPP (Alpha Channel)</div><div style="left:1667px;top:270px;width:32px;height:18px;background:linear-gradient(#c4d8ee 0px,#b4cce6 8px,#9ab6d6 9px,#a8c2e0 14px,#bcd2ea 17px);border:1px solid #4a5a70;border-radius:3px;box-sizing:border-box"></div><div style="left:1677px;top:279px;width:11px;height:5px;background:#f0f0f0;border:1px solid #3a3a4a;border-radius:1px;box-sizing:border-box"></div><div style="left:1701px;top:270px;width:32px;height:18px;background:linear-gradient(#c4d8ee 0px,#b4cce6 8px,#9ab6d6 9px,#a8c2e0 14px,#bcd2ea 17px);border:1px solid #4a5a70;border-radius:3px;box-sizing:border-box"></div><div style="left:1711px;top:274px;width:11px;height:9px;background:#f0f0f0;border:1px solid #3a3a4a;border-radius:1px;box-sizing:border-box"></div><div style="left:1714px;top:277px;width:5px;height:3px;background:#9ab6d6;border:1px solid #3a3a4a;box-sizing:border-box"></div><div style="left:1735px;top:270px;width:32px;height:18px;background:linear-gradient(#eea494 0px,#dc7860 8px,#c44a2c 9px,#d0634a 14px,#e8907a 17px);border:1px solid #5a1a1a;border-radius:3px;box-sizing:border-box"></div><svg style="left:1745px;top:273px" width="12" height="11" viewBox="0 0 12 11"><path d="M2 1.5L10 9.5M10 1.5L2 9.5" stroke="#3a3a4a" stroke-width="3.6" stroke-linecap="round"/><path d="M2 1.5L10 9.5M10 1.5L2 9.5" stroke="#fff" stroke-width="2" stroke-linecap="round"/></svg><div style="left:19px;top:291px;width:1749px;height:719px;background:#6a7080"></div><div style="left:20px;top:292px;width:1748px;height:30px;background:linear-gradient(#ffffff 0px,#f3f5fa 6px,#e8ecf5 14px,#d6ddec 15px,#cfd8ea 30px)"></div><div style="left:20px;top:322px;width:1748px;height:1px;background:#6a7080"></div><div style="left:20px;top:323px;width:1748px;height:687px;background:#e0e0e0"></div><div style="left:20px;top:323px;width:1748px;height:1px;background:#ffffff"></div><div style="left:20px;top:323px;width:1px;height:687px;background:#ffffff"></div><svg style="left:28px;top:299px;" width="17.0" height="17.0" viewBox="0 0 17 17"><path d="M3.5 2.5H10.5L13.5 5.5V16.5H3.5Z" fill="#f8f8f8" stroke="#8a8a8a"/><path d="M10.5 2.5V5.5H13.5" fill="#e8e8e8" stroke="#a0a0a0"/><rect x="7" y="7" width="10" height="10" rx="1.2" fill="url(#gPurple)"/><path d="M10 8.5L14.8 13H12.4L13.5 15.5L12.5 16L11.4 13.5L10 15Z" fill="#fff"/><g fill="#f0c018"><rect x="2.5" y="0" width="1.2" height="2"/><rect x="2.5" y="4.5" width="1.2" height="2"/><rect x="0" y="2.6" width="2" height="1.2"/><rect x="4.5" y="2.6" width="2" height="1.2"/><rect x=".6" y=".6" width="1.2" height="1.2"/><rect x="4.6" y=".6" width="1.2" height="1.2"/><rect x=".6" y="4.6" width="1.2" height="1.2"/><rect x="4.6" y="4.6" width="1.2" height="1.2"/><rect x="2" y="2" width="2.5" height="2.5" fill="#fff4b0"/></g></svg><svg style="left:52px;top:299px;" width="17.0" height="17.0" viewBox="0 0 17 17"><path d="M3.5 2.5H10.5L13.5 5.5V16.5H3.5Z" fill="#f8f8f8" stroke="#8a8a8a"/><path d="M10.5 2.5V5.5H13.5" fill="#e8e8e8" stroke="#a0a0a0"/><rect x="7" y="7" width="10" height="10" rx="1.2" fill="url(#gViolet)"/><path d="M9 8.5H15L12 12L15 15.5H9L12 12Z" fill="#fff"/><g fill="#f0c018"><rect x="2.5" y="0" width="1.2" height="2"/><rect x="2.5" y="4.5" width="1.2" height="2"/><rect x="0" y="2.6" width="2" height="1.2"/><rect x="4.5" y="2.6" width="2" height="1.2"/><rect x=".6" y=".6" width="1.2" height="1.2"/><rect x="4.6" y=".6" width="1.2" height="1.2"/><rect x=".6" y="4.6" width="1.2" height="1.2"/><rect x="4.6" y="4.6" width="1.2" height="1.2"/><rect x="2" y="2" width="2.5" height="2.5" fill="#fff4b0"/></g></svg><div style="left:76px;top:297px;width:1px;height:20px;background:#8a94a8"></div><div style="left:77px;top:297px;width:1px;height:20px;background:#ffffff"></div><svg style="left:85px;top:299px;" width="16.0" height="16.0" viewBox="0 0 16 16"><path d="M.5 .5H15.5V15.5H2.5L.5 13.5Z" fill="url(#gBlue)" stroke="#30509a"/><rect x="3" y="1" width="10" height="5" fill="#e8e8e8"/><rect x="4" y="9" width="8" height="7" fill="#e0e0e0"/><rect x="6" y="11" width="3" height="4" fill="#3050a0"/></svg><svg style="left:108px;top:299px;" width="17.0" height="16.0" viewBox="0 0 17 16"><rect x=".5" y=".5" width="11" height="12" rx="1" fill="#e4e4e4" stroke="#d0d0d0"/><rect x="4.5" y="6.5" width="12" height="9" fill="#e8e8e8" stroke="#c8c8c8"/><g stroke="#c8c8c8"><line x1="8.5" y1="6.5" x2="8.5" y2="15.5"/><line x1="12.5" y1="6.5" x2="12.5" y2="15.5"/></g></svg><svg style="left:132px;top:299px;" width="18.0" height="16.0" viewBox="0 0 18 16"><rect x=".5" y=".5" width="13" height="12" fill="#f4e4e4" stroke="#909090"/><rect x="1" y="1" width="12" height="3" fill="url(#gLibRed)"/><line x1="5" y1="4" x2="5" y2="12" stroke="#d0a0a0"/><path d="M10 7H13V10H16V13H13V16H10V13H7V10H10Z" fill="#40c040" stroke="#208a20" stroke-width=".7"/></svg><div style="left:156px;top:297px;width:1px;height:20px;background:#8a94a8"></div><div style="left:157px;top:297px;width:1px;height:20px;background:#ffffff"></div><div style="left:161px;top:296px;width:24px;height:23px;background:linear-gradient(#d8ddef,#c2c8e0);border:1px solid #5e6478;border-radius:3px;box-sizing:border-box"></div><svg style="left:165px;top:300px;" width="16.0" height="16.0" viewBox="0 0 16 16"><rect x="1.5" y="1.5" width="13" height="13" fill="#a8acb8" stroke="#202020" stroke-dasharray="2.5 1.5"/></svg><svg style="left:187px;top:298px;" width="17.0" height="17.0" viewBox="0 0 17 17"><path d="M4 16L1 10Q.5 8.5 2 8.5L4 10V3Q4 1.5 5.3 1.5Q6.5 1.5 6.5 3V8V1.8Q6.5 .5 7.8 .5Q9 .5 9 1.8V8V2.5Q9 1.2 10.3 1.2Q11.5 1.2 11.5 2.5V8.5V4Q11.5 2.8 12.7 2.8Q14 2.8 14 4V11Q14 14 12 16Z" fill="#fff" stroke="#202020" stroke-width="1"/></svg><svg style="left:211px;top:298px;" width="18.0" height="16.0" viewBox="0 0 18 16"><rect x="1.5" y="4.5" width="11" height="11" fill="#ece4f8" stroke="#303030" stroke-dasharray="1.5 1"/><rect x="3" y="6" width="3" height="3" fill="#c8b8f0"/><rect x="9" y="6" width="3" height="3" fill="#c8b8f0"/><rect x="6" y="9" width="3" height="3" fill="#c8b8f0"/><rect x="3" y="12" width="3" height="3" fill="#c8b8f0"/><line x1="7" y1="1" x2="17" y2="11" stroke="#303030" stroke-width="2.4"/><line x1="7" y1="1" x2="17" y2="11" stroke="#a0a0a0" stroke-width=".8"/></svg><div style="left:236px;top:297px;width:1px;height:20px;background:#8a94a8"></div><div style="left:237px;top:297px;width:1px;height:20px;background:#ffffff"></div><svg style="left:244px;top:300px;" width="16.0" height="16.0" viewBox="0 0 16 16"><path d="M1 3V14H10L7 11Q10 9 13 10Q15 11 15 14Q15 5 9 4Q5 3 3 5Z" fill="url(#gBlue)" stroke="#3858b8" stroke-width=".6"/></svg><svg style="left:268px;top:300px;" width="16.0" height="16.0" viewBox="0 0 16 16"><path d="M15 3V14H6L9 11Q6 9 3 10Q1 11 1 14Q1 5 7 4Q11 3 13 5Z" fill="#c8ccd0" stroke="#b8bcc0" stroke-width=".6"/></svg><svg style="left:292px;top:299px;" width="16.0" height="16.0" viewBox="0 0 16 16"><path d="M.5 .5H6.5L9.5 3.5V12.5H.5Z" fill="#f4f4f4" stroke="#8a8a8a"/><path d="M5.5 4.5H11.5L15.5 8.5V15.5H5.5Z" fill="url(#gPage)" stroke="#6e6e6e"/></svg><div style="left:316px;top:297px;width:1px;height:20px;background:#8a94a8"></div><div style="left:317px;top:297px;width:1px;height:20px;background:#ffffff"></div><svg style="left:324px;top:299px;" width="16.0" height="16.0" viewBox="0 0 16 16"><rect x="1.5" y="1.5" width="13" height="13" fill="none" stroke="#404858" stroke-dasharray="2 1"/><rect x="4.5" y="4.5" width="7" height="7" fill="#d8dce8" stroke="#404858"/><line x1="4" y1="12" x2="12" y2="4" stroke="#404858"/></svg><svg style="left:347px;top:299px;" width="18.0" height="17.0" viewBox="0 0 18 17"><rect x=".5" y="1.5" width="15" height="13" fill="#f0f0f0" stroke="#404040"/><rect x="2" y="3" width="12" height="10" fill="#a8c8f0"/><path d="M10 2L14 1L16 5L13 5Q12 7 10 8L9 6Q11 5 11 4Z" fill="#40c040" stroke="#208020" stroke-width=".5"/><path d="M8 11L4 12L2 16L5 15Q6 13 8 12Z" fill="#40c040" stroke="#208020" stroke-width=".5"/></svg><svg style="left:372px;top:298px;" width="17.0" height="17.0" viewBox="0 0 17 17"><path d="M8.5 1.5A7 7 0 1 0 15.5 8.5" fill="none" stroke="#3a7ac8" stroke-width="2.2"/><path d="M8.5 5A3.5 3.5 0 1 1 5 8.5" fill="none" stroke="#3a7ac8" stroke-width="2"/><path d="M5 8.5L3 12L8 14Z" fill="#3a7ac8"/></svg><svg style="left:395px;top:298px;" width="18.0" height="17.0" viewBox="0 0 18 17"><rect x=".5" y=".5" width="14" height="12" fill="#c8b8f0" stroke="#5030a0"/><g fill="#5030a0"><rect x="1" y="1" width="13" height="2"/><rect x="1" y="10" width="13" height="2"/></g><path d="M11 7A5 5 0 1 0 16 12" fill="none" stroke="#3a7ac8" stroke-width="2"/><path d="M11 10A2 2 0 1 1 9 12" fill="none" stroke="#3a7ac8" stroke-width="1.8"/></svg><div style="left:420px;top:297px;width:1px;height:20px;background:#8a94a8"></div><div style="left:421px;top:297px;width:1px;height:20px;background:#ffffff"></div><svg style="left:428px;top:299px;" width="17.0" height="17.0" viewBox="0 0 17 17"><rect x=".5" y=".5" width="13" height="13" fill="url(#gRainbow)" stroke="#404880"/><path d="M14 17L17 14V17Z" fill="#303050"/></svg><svg style="left:453px;top:298px;" width="17.0" height="17.0" viewBox="0 0 17 17"><path d="M4 16Q6 16 7 12L9 5Q10 2 13 2Q15 2 14 4Q13 3 12 4L10 11Q8 17 4 16Z M6 7H12" fill="#c8b8f4" stroke="#5040a0" stroke-width="1.1"/><path d="M14 17L17 14V17Z" fill="#303050"/></svg><div style="left:477px;top:297px;width:1px;height:20px;background:#8a94a8"></div><div style="left:478px;top:297px;width:1px;height:20px;background:#ffffff"></div><svg style="left:483px;top:298px;" width="17.0" height="17.0" viewBox="0 0 17 17"><line x1="10" y1="10" x2="15" y2="15" stroke="#c89030" stroke-width="3.5" stroke-linecap="round"/><circle cx="6.5" cy="6.5" r="5.5" fill="#eef4fc" stroke="#8a9098" stroke-width="1.5"/><path d="M5.5 3.5H7.5V5.5H9.5V7.5H7.5V9.5H5.5V7.5H3.5V5.5H5.5Z" fill="#3060d0"/></svg><svg style="left:508px;top:298px;" width="17.0" height="17.0" viewBox="0 0 17 17"><line x1="10" y1="10" x2="15" y2="15" stroke="#c89030" stroke-width="3.5" stroke-linecap="round"/><circle cx="6.5" cy="6.5" r="5.5" fill="#eef4fc" stroke="#8a9098" stroke-width="1.5"/><rect x="3.5" y="5.5" width="6" height="2" fill="#3060d0"/></svg><div style="left:532px;top:297px;width:1px;height:20px;background:#8a94a8"></div><div style="left:533px;top:297px;width:1px;height:20px;background:#ffffff"></div><svg style="left:540px;top:299px;" width="16.0" height="16.0" viewBox="0 0 16 16"><path d="M1.5 .5H10.5L14.5 4.5V15.5H1.5Z" fill="url(#gPage)" stroke="#707070"/><path d="M4 9L6 8L7.5 10.5L11 5.5L12.5 6.5L7.5 13Z" fill="#e05030"/></svg><div style="left:564px;top:297px;width:1px;height:20px;background:#8a94a8"></div><div style="left:565px;top:297px;width:1px;height:20px;background:#ffffff"></div><svg style="left:573px;top:299px;" width="16.0" height="16.0" viewBox="0 0 16 16"><rect x=".5" y=".5" width="15" height="14" fill="#f4f4f4" stroke="#606060"/><rect x="1" y="1" width="14" height="3" fill="#5a7ae0"/><rect x="3" y="8" width="6" height="5" fill="none" stroke="#606060"/><path d="M7 10L12 6" stroke="#30a030" stroke-width="2"/><path d="M10 5H13V8Z" fill="#30a030"/></svg><svg style="left:596px;top:299px;" width="17.0" height="16.0" viewBox="0 0 17 16"><rect x="3.5" y=".5" width="10" height="6" fill="#fff" stroke="#707070"/><rect x=".5" y="5.5" width="16" height="7" rx="2" fill="#e0e0e0" stroke="#707070"/><rect x="3.5" y="10.5" width="10" height="5" fill="#fff" stroke="#707070"/></svg><svg style="left:621px;top:298px;" width="16.0" height="17.0" viewBox="0 0 16 17"><path d="M1.5 .5H10.5L14.5 4.5V16.5H1.5Z" fill="url(#gPage)" stroke="#707070"/><circle cx="7.5" cy="9" r="3.5" fill="#c8dcf0" stroke="#4a6088" stroke-width="1.3"/><line x1="10" y1="11.5" x2="13" y2="14.5" stroke="#c89030" stroke-width="2"/></svg><div style="left:510px;top:346px;width:768px;height:664px;background-color:#fff;background-image:linear-gradient(45deg,#ebebeb 25%,transparent 25%,transparent 75%,#ebebeb 75%),linear-gradient(45deg,#ebebeb 25%,transparent 25%,transparent 75%,#ebebeb 75%);background-size:8px 8px;background-position:3px 2px,7px 6px"></div><svg style="left:510px;top:346px;overflow:hidden" width="768" height="664" viewBox="0 0 256 221.333"><defs><clipPath id="cpA"><path d="M46 175L46 47.5A16.5 16.5 0 0 1 73.54 35.24L150 105.30C158 112.50 166 118 165 128C164 138 150 142 140 144C130 146 122 147.5 116 149.4C104.00 153.72 88.29 168.44 74.29 185.24A16 16 0 0 1 46 175Z"/></clipPath></defs><path d="M46 175L46 47.5A16.5 16.5 0 0 1 73.54 35.24L150 105.30C158 112.50 166 118 165 128C164 138 150 142 140 144C130 146 122 147.5 116 149.4C104.00 153.72 88.29 168.44 74.29 185.24A16 16 0 0 1 46 175Z" fill="#fff"/><circle cx="189.47" cy="248.75" r="162.20" fill="#80eedc" clip-path="url(#cpA)"/><path d="M46 175L46 47.5A16.5 16.5 0 0 1 73.54 35.24L150 105.30C158 112.50 166 118 165 128C164 138 150 142 140 144C130 146 122 147.5 116 149.4C104.00 153.72 88.29 168.44 74.29 185.24A16 16 0 0 1 46 175Z" fill="none" stroke="#070707" stroke-width="8" stroke-linejoin="round"/></svg><div style="left:510px;top:346px;width:768px;height:1px;background-image:linear-gradient(90deg,#000 50%,transparent 50%);background-size:8px 1px;background-position:5px 0"></div><div style="left:510px;top:346px;width:1px;height:664px;background-image:linear-gradient(#000 50%,transparent 50%);background-size:1px 8px;background-position:0 5px"></div><div style="left:1277px;top:346px;width:1px;height:664px;background-image:linear-gradient(#000 50%,transparent 50%);background-size:1px 8px;background-position:0 5px"></div><div style="left:889.5px;top:420.06px;font-size:14px;line-height:14px;color:#e23a3a;font-weight:400;font-family:'Liberation Sans';letter-spacing:0.270px;white-space:pre;">Ctrl + A (Select All)</div><svg style="left:1008px;top:498px" width="13" height="21" viewBox="0 0 13 21"><path d="M.5 .5V16.5L4.5 12.8L7.3 19.5L9.6 18.5L6.9 12H12Z" fill="#fff" stroke="#000" stroke-linejoin="miter"/></svg><div style="left:863px;top:538px;width:284px;height:376px;background:rgba(0,0,0,.28);filter:blur(1.5px)"></div><div style="left:860px;top:535px;width:284px;height:376px;background:#f0f0f0;border:1px solid #979797;box-sizing:border-box"></div><div style="left:861px;top:536px;width:29px;height:374px;background:linear-gradient(90deg,#f4f5fa,#e2e5f3 40%,#c6cce8)"></div><div style="left:890px;top:536px;width:1px;height:374px;background:#fafafa"></div><div style="left:896px;top:542.89px;font-size:12px;line-height:12px;color:#000;font-weight:400;font-family:'Liberation Sans';letter-spacing:-0.151px;white-space:pre;">Create Static Cursor from Selection...</div><svg style="left:868px;top:540px;" width="16" height="16" viewBox="0 0 17 17"><path d="M3.5 2.5H10.5L13.5 5.5V16.5H3.5Z" fill="#f8f8f8" stroke="#8a8a8a"/><path d="M10.5 2.5V5.5H13.5" fill="#e8e8e8" stroke="#a0a0a0"/><rect x="7" y="7" width="10" height="10" rx="1.2" fill="url(#gPurple)"/><path d="M10 8.5L14.8 13H12.4L13.5 15.5L12.5 16L11.4 13.5L10 15Z" fill="#fff"/><g fill="#f0c018"><rect x="2.5" y="0" width="1.2" height="2"/><rect x="2.5" y="4.5" width="1.2" height="2"/><rect x="0" y="2.6" width="2" height="1.2"/><rect x="4.5" y="2.6" width="2" height="1.2"/><rect x=".6" y=".6" width="1.2" height="1.2"/><rect x="4.6" y=".6" width="1.2" height="1.2"/><rect x=".6" y="4.6" width="1.2" height="1.2"/><rect x="4.6" y="4.6" width="1.2" height="1.2"/><rect x="2" y="2" width="2.5" height="2.5" fill="#fff4b0"/></g></svg><div style="left:896px;top:564.89px;font-size:12px;line-height:12px;color:#000;font-weight:400;font-family:'Liberation Sans';letter-spacing:-0.069px;white-space:pre;">Create Animated Cursor from Selection...</div><svg style="left:868px;top:562px;" width="16" height="16" viewBox="0 0 17 17"><path d="M3.5 2.5H10.5L13.5 5.5V16.5H3.5Z" fill="#f8f8f8" stroke="#8a8a8a"/><path d="M10.5 2.5V5.5H13.5" fill="#e8e8e8" stroke="#a0a0a0"/><rect x="7" y="7" width="10" height="10" rx="1.2" fill="url(#gViolet)"/><path d="M9 8.5H15L12 12L15 15.5H9L12 12Z" fill="#fff"/><g fill="#f0c018"><rect x="2.5" y="0" width="1.2" height="2"/><rect x="2.5" y="4.5" width="1.2" height="2"/><rect x="0" y="2.6" width="2" height="1.2"/><rect x="4.5" y="2.6" width="2" height="1.2"/><rect x=".6" y=".6" width="1.2" height="1.2"/><rect x="4.6" y=".6" width="1.2" height="1.2"/><rect x=".6" y="4.6" width="1.2" height="1.2"/><rect x="4.6" y="4.6" width="1.2" height="1.2"/><rect x="2" y="2" width="2.5" height="2.5" fill="#fff4b0"/></g></svg><div style="left:891px;top:585px;width:250px;height:1px;background:#d7d7d7"></div><div style="left:891px;top:586px;width:250px;height:1px;background:#ffffff"></div><div style="left:896px;top:594.89px;font-size:12px;line-height:12px;color:#000;font-weight:400;font-family:'Liberation Sans';letter-spacing:0.013px;white-space:pre;">Add to the Librarian</div><svg style="left:868px;top:592px;" width="16" height="16" viewBox="0 0 18 16"><rect x=".5" y=".5" width="13" height="12" fill="#f4e4e4" stroke="#909090"/><rect x="1" y="1" width="12" height="3" fill="url(#gLibRed)"/><line x1="5" y1="4" x2="5" y2="12" stroke="#d0a0a0"/><path d="M10 7H13V10H16V13H13V16H10V13H7V10H10Z" fill="#40c040" stroke="#208a20" stroke-width=".7"/></svg><div style="left:896px;top:616.89px;font-size:12px;line-height:12px;color:#8d8d8d;font-weight:400;font-family:'Liberation Sans';letter-spacing:-0.235px;white-space:pre;">Save As Filmstrip...</div><svg style="left:868px;top:614px;" width="16" height="16" viewBox="0 0 17 16"><rect x=".5" y=".5" width="11" height="12" rx="1" fill="#e4e4e4" stroke="#d0d0d0"/><rect x="4.5" y="6.5" width="12" height="9" fill="#e8e8e8" stroke="#c8c8c8"/><g stroke="#c8c8c8"><line x1="8.5" y1="6.5" x2="8.5" y2="15.5"/><line x1="12.5" y1="6.5" x2="12.5" y2="15.5"/></g></svg><div style="left:896px;top:638.89px;font-size:12px;line-height:12px;color:#000;font-weight:400;font-family:'Liberation Sans';letter-spacing:0.246px;white-space:pre;">Copy</div><svg style="left:868px;top:636px;" width="16" height="16" viewBox="0 0 16 16"><path d="M.5 .5H6.5L9.5 3.5V12.5H.5Z" fill="#f4f4f4" stroke="#8a8a8a"/><path d="M5.5 4.5H11.5L15.5 8.5V15.5H5.5Z" fill="url(#gPage)" stroke="#6e6e6e"/></svg><div style="left:896px;top:660.89px;font-size:12px;line-height:12px;color:#000;font-weight:400;font-family:'Liberation Sans';letter-spacing:-0.270px;white-space:pre;">Select all</div><div style="left:891px;top:681px;width:250px;height:1px;background:#d7d7d7"></div><div style="left:891px;top:682px;width:250px;height:1px;background:#ffffff"></div><div style="left:896px;top:690.89px;font-size:12px;line-height:12px;color:#000;font-weight:400;font-family:'Liberation Sans';letter-spacing:-0.004px;white-space:pre;">Crop</div><svg style="left:868px;top:688px;" width="16" height="16" viewBox="0 0 16 16"><rect x="1.5" y="1.5" width="13" height="13" fill="none" stroke="#404858" stroke-dasharray="2 1"/><rect x="4.5" y="4.5" width="7" height="7" fill="#d8dce8" stroke="#404858"/><line x1="4" y1="12" x2="12" y2="4" stroke="#404858"/></svg><div style="left:896px;top:712.89px;font-size:12px;line-height:12px;color:#000;font-weight:400;font-family:'Liberation Sans';letter-spacing:-0.632px;white-space:pre;">Resize...</div><svg style="left:868px;top:710px;" width="16" height="16" viewBox="0 0 18 17"><rect x=".5" y="1.5" width="15" height="13" fill="#f0f0f0" stroke="#404040"/><rect x="2" y="3" width="12" height="10" fill="#a8c8f0"/><path d="M10 2L14 1L16 5L13 5Q12 7 10 8L9 6Q11 5 11 4Z" fill="#40c040" stroke="#208020" stroke-width=".5"/><path d="M8 11L4 12L2 16L5 15Q6 13 8 12Z" fill="#40c040" stroke="#208020" stroke-width=".5"/></svg><div style="left:891px;top:733px;width:250px;height:1px;background:#d7d7d7"></div><div style="left:891px;top:734px;width:250px;height:1px;background:#ffffff"></div><div style="left:896px;top:742.89px;font-size:12px;line-height:12px;color:#000;font-weight:400;font-family:'Liberation Sans';letter-spacing:0.064px;white-space:pre;">Convert to</div><svg style="left:1130px;top:743px" width="5" height="8" viewBox="0 0 5 8"><path d="M0 0L4.5 4L0 8Z" fill="#000"/></svg><div style="left:896px;top:764.89px;font-size:12px;line-height:12px;color:#000;font-weight:400;font-family:'Liberation Sans';letter-spacing:-0.226px;white-space:pre;">Load Palette...</div><div style="left:891px;top:785px;width:250px;height:1px;background:#d7d7d7"></div><div style="left:891px;top:786px;width:250px;height:1px;background:#ffffff"></div><div style="left:896px;top:794.89px;font-size:12px;line-height:12px;color:#000;font-weight:400;font-family:'Liberation Sans';letter-spacing:-0.337px;white-space:pre;">Full Screen</div><svg style="left:868px;top:792px;" width="16" height="16" viewBox="0 0 16 16"><rect x=".5" y=".5" width="15" height="14" fill="#f4f4f4" stroke="#606060"/><rect x="1" y="1" width="14" height="3" fill="#5a7ae0"/><rect x="3" y="8" width="6" height="5" fill="none" stroke="#606060"/><path d="M7 10L12 6" stroke="#30a030" stroke-width="2"/><path d="M10 5H13V8Z" fill="#30a030"/></svg><div style="left:896px;top:816.89px;font-size:12px;line-height:12px;color:#000;font-weight:400;font-family:'Liberation Sans';letter-spacing:0.141px;white-space:pre;">Zoom In</div><svg style="left:868px;top:814px;" width="16" height="16" viewBox="0 0 17 17"><line x1="10" y1="10" x2="15" y2="15" stroke="#c89030" stroke-width="3.5" stroke-linecap="round"/><circle cx="6.5" cy="6.5" r="5.5" fill="#eef4fc" stroke="#8a9098" stroke-width="1.5"/><path d="M5.5 3.5H7.5V5.5H9.5V7.5H7.5V9.5H5.5V7.5H3.5V5.5H5.5Z" fill="#3060d0"/></svg><div style="left:896px;top:838.89px;font-size:12px;line-height:12px;color:#000;font-weight:400;font-family:'Liberation Sans';letter-spacing:0.205px;white-space:pre;">Zoom Out</div><svg style="left:868px;top:836px;" width="16" height="16" viewBox="0 0 17 17"><line x1="10" y1="10" x2="15" y2="15" stroke="#c89030" stroke-width="3.5" stroke-linecap="round"/><circle cx="6.5" cy="6.5" r="5.5" fill="#eef4fc" stroke="#8a9098" stroke-width="1.5"/><rect x="3.5" y="5.5" width="6" height="2" fill="#3060d0"/></svg><div style="left:891px;top:859px;width:250px;height:1px;background:#d7d7d7"></div><div style="left:891px;top:860px;width:250px;height:1px;background:#ffffff"></div><div style="left:896px;top:868.89px;font-size:12px;line-height:12px;color:#000;font-weight:400;font-family:'Liberation Sans';letter-spacing:-0.169px;white-space:pre;">Image Layer/Frame List</div><svg style="left:1130px;top:869px" width="5" height="8" viewBox="0 0 5 8"><path d="M0 0L4.5 4L0 8Z" fill="#000"/></svg><div style="left:896px;top:890.89px;font-size:12px;line-height:12px;color:#000;font-weight:400;font-family:'Liberation Sans';letter-spacing:-0.208px;white-space:pre;">Properties...</div><svg style="left:868px;top:888px;" width="16" height="16" viewBox="0 0 16 16"><path d="M1.5 .5H10.5L14.5 4.5V15.5H1.5Z" fill="url(#gPage)" stroke="#707070"/><path d="M4 9L6 8L7.5 10.5L11 5.5L12.5 6.5L7.5 13Z" fill="#e05030"/></svg><div style="left:862px;top:634px;width:215px;height:23px;border:2px solid #9c3fb0;box-sizing:border-box"></div><div style="left:1768px;top:121px;width:149px;height:889px;background:#f0f4fc"></div><div style="left:1767px;top:121px;width:1px;height:889px;background:#fafbfe"></div><div style="left:1775px;top:129px;width:23px;height:22px;background:linear-gradient(#d6dbf0,#c4cae6);border:1px solid #4e5468;border-radius:4px;box-sizing:border-box;box-shadow:0 0 0 1px rgba(160,170,230,.35)"></div><svg style="left:1779px;top:133px" width="15" height="14" viewBox="0 0 15 14"><rect x="1.5" y="1.5" width="12" height="11" fill="#b8bccc" stroke="#eef0f6" stroke-dasharray="2 1.5"/></svg><svg style="left:1801px;top:131px" width="16" height="16" viewBox="0 0 16 16"><path d="M2 15L3 11L10 4L12 6L5 13Z M10 4L11 2Q13 0 15 2Q16 4 14 5L12 6Z" fill="#d4d6da" stroke="#b8babe" stroke-width=".9"/></svg><svg style="left:1824px;top:131px" width="17" height="15" viewBox="0 0 17 15"><path d="M1 9L9 2H16V8L8 14H1Z M1 9H8L16 2 M8 9V14" fill="#dcdee2" stroke="#b8babe" stroke-width=".9"/></svg><svg style="left:1847px;top:131px" width="17" height="16" viewBox="0 0 17 16"><path d="M2 15L3 11L12 2Q14 1 15 3Q16 4 14 5L5 14Z M3 11L5 14" fill="#d4d6da" stroke="#b8babe" stroke-width=".9"/></svg><svg style="left:1869px;top:131px" width="17" height="16" viewBox="0 0 17 16"><path d="M1 15Q3 11 5 10L7 12Q5 15 1 15Z M6 10L14 2L16 4L8 12Z" fill="#d0d2d6" stroke="#b8babe" stroke-width=".9"/></svg><svg style="left:1892px;top:130px" width="17" height="17" viewBox="0 0 17 17"><path d="M1 8L8 2L14 8L7 14Z M8 2V8 M15 7V14" fill="#d8dade" stroke="#b8babe" stroke-width=".9"/></svg><svg style="left:1778px;top:154px" width="15" height="15" viewBox="0 0 15 15"><line x1="2" y1="13" x2="13" y2="2" stroke="#c6c8cc" stroke-width="1.6"/></svg><svg style="left:1801px;top:154px" width="15" height="15" viewBox="0 0 15 15"><rect x="1.5" y="2.5" width="12" height="10" fill="none" stroke="#c6c8cc"/></svg><svg style="left:1824px;top:154px" width="15" height="15" viewBox="0 0 15 15"><rect x="1.5" y="2.5" width="12" height="10" fill="#dcdee4" stroke="#c6c8cc"/></svg><svg style="left:1847px;top:154px" width="16" height="15" viewBox="0 0 16 15"><ellipse cx="8" cy="7.5" rx="7" ry="5.5" fill="none" stroke="#c6c8cc"/></svg><svg style="left:1870px;top:154px" width="16" height="15" viewBox="0 0 16 15"><ellipse cx="8" cy="7.5" rx="7" ry="5.5" fill="#dcdee4" stroke="#c6c8cc"/></svg><svg style="left:1893px;top:154px" width="15" height="15" viewBox="0 0 15 15"><rect x="1.5" y="2.5" width="12" height="10" fill="#d4d6dc" stroke="#c6c8cc"/><rect x="3.5" y="4.5" width="8" height="6" fill="#e4e6ea"/></svg><div style="left:1775px;top:179px;width:138px;height:1px;background:#9aa2b4"></div><div style="left:1775px;top:185px;width:23px;height:22px;background:linear-gradient(#d6dbf0,#c4cae6);border:1px solid #4e5468;border-radius:4px;box-sizing:border-box;box-shadow:0 0 0 1px rgba(160,170,230,.35)"></div><div style="left:1786px;top:196px;width:1px;height:1px;background:#6a7090"></div><div style="left:1808px;top:195px;width:3px;height:3px;background:#c6c8cc"></div><div style="left:1830px;top:194px;width:4px;height:4px;background:#c6c8cc"></div><div style="left:1853px;top:194px;width:5px;height:5px;background:#c6c8cc"></div><svg style="left:1849px;top:190px" width="12" height="12" viewBox="0 0 12 12"><path d="M6 1L11 6L6 11L1 6Z" transform="translate(6 6) scale(.55) translate(-6 -6)" fill="#c6c8cc"/></svg><svg style="left:1871px;top:189px" width="13" height="13" viewBox="0 0 13 13"><path d="M6.5 1L12 6.5L6.5 12L1 6.5Z" transform="translate(6.5 6.5) scale(.7) translate(-6.5 -6.5)" fill="#c6c8cc"/></svg><svg style="left:1894px;top:189px" width="13" height="13" viewBox="0 0 13 13"><path d="M6.5 1L12 6.5L6.5 12L1 6.5Z" fill="#c6c8cc"/></svg><svg style="left:1781px;top:213px" width="10" height="10" viewBox="0 0 10 10"><circle cx="5" cy="5" r="1.2" fill="#c6c8cc"/></svg><svg style="left:1804px;top:213px" width="10" height="10" viewBox="0 0 10 10"><circle cx="5" cy="5" r="2" fill="#c6c8cc"/></svg><svg style="left:1827px;top:213px" width="10" height="10" viewBox="0 0 10 10"><circle cx="5" cy="5" r="3" fill="#c6c8cc"/></svg><svg style="left:1850px;top:213px" width="10" height="10" viewBox="0 0 10 10"><circle cx="5" cy="5" r="3.8" fill="#c6c8cc"/></svg><svg style="left:1872px;top:213px" width="10" height="10" viewBox="0 0 10 10"><line x1="2" y1="8" x2="8" y2="2" stroke="#c6c8cc" stroke-width="2" stroke-linecap="round"/></svg><svg style="left:1895px;top:213px" width="10" height="10" viewBox="0 0 10 10"><line x1="2" y1="2" x2="8" y2="8" stroke="#c6c8cc" stroke-width="2" stroke-linecap="round"/></svg><div style="left:1775px;top:235px;width:138px;height:1px;background:#9aa2b4"></div><div style="left:1775px;top:241px;width:23px;height:22px;background:linear-gradient(#d6dbf0,#c4cae6);border:1px solid #4e5468;border-radius:4px;box-sizing:border-box;box-shadow:0 0 0 1px rgba(160,170,230,.35)"></div><div style="left:1779px;top:246px;width:14px;height:12px;background:#a8acba"></div><div style="left:1802px;top:245px;width:14px;height:12px;background:linear-gradient(90deg,#f0f0f2,#c0c2c8);border:1px solid #c8cad0;box-sizing:border-box"></div><div style="left:1825px;top:245px;width:14px;height:12px;background:linear-gradient(#f0f0f2,#c0c2c8);border:1px solid #c8cad0;box-sizing:border-box"></div><div style="left:1848px;top:245px;width:14px;height:12px;background:radial-gradient(#c8cad0,#eeeff2);border:1px solid #c8cad0;box-sizing:border-box"></div><div style="left:1870px;top:245px;width:14px;height:12px;background:linear-gradient(135deg,#d0d2d6 50%,#eceef2 50%);border:1px solid #c8cad0;box-sizing:border-box"></div><div style="left:1893px;top:245px;width:14px;height:12px;background:linear-gradient(90deg,#eaeaee,#c4c6ca,#eaeaee);border:1px solid #c8cad0;box-sizing:border-box"></div><div style="left:1775px;top:268px;width:138px;height:1px;background:#9aa2b4"></div><svg style="left:1778px;top:276px" width="16" height="17" viewBox="0 0 16 17"><path d="M4 16V7Q4 2 8 2Q12 2 12 7V10H14L10.5 15L7 10H9V7Q9 5 8 5Q7 5 7 7V16Z" fill="#e6e8ec" stroke="#c6c8cc" stroke-width="1.1"/></svg><svg style="left:1801px;top:276px" width="17" height="16" viewBox="0 0 17 16"><path d="M9 2Q2 2 2 8Q2 13 8 13H11V16L16 11.5L11 7V10H8Q5 10 5 8Q5 5 9 5H12V2Z" fill="#e6e8ec" stroke="#c6c8cc" stroke-width="1.1"/></svg><svg style="left:1824px;top:276px" width="16" height="17" viewBox="0 0 16 17"><path d="M8 2A7 7 0 1 0 15 9 M8 5.5A3.5 3.5 0 1 1 4.5 9 M4.5 9L3 14L8 14Z" fill="none" stroke="#c6c8cc" stroke-width="2"/></svg><svg style="left:1847px;top:276px" width="17" height="17" viewBox="0 0 17 17"><path d="M1 16L7 1H10L16 16H13L11.5 12H5.5L4 16Z M6.5 9H10.5L8.5 4Z" fill="#e6e8ec" stroke="#c6c8cc" stroke-width="1.1"/></svg><div style="left:1866px;top:276px;width:1px;height:18px;background:#c4c8d0"></div><svg style="left:1870px;top:276px;" width="17" height="17" viewBox="0 0 17 17"><path d="M4 16Q6 16 7 12L9 5Q10 2 13 2Q15 2 14 4Q13 3 12 4L10 11Q8 17 4 16Z M6 7H12" fill="#c8b8f4" stroke="#5040a0" stroke-width="1.1"/><path d="M14 17L17 14V17Z" fill="#303050"/></svg><svg style="left:1893px;top:276px;" width="17" height="17" viewBox="0 0 17 17"><rect x=".5" y=".5" width="13" height="13" fill="url(#gRainbow)" stroke="#404880"/><path d="M14 17L17 14V17Z" fill="#303050"/></svg><div style="left:1769px;top:303px;width:148px;height:1px;background:#9aa2b4"></div><div style="left:1771px;top:307px;width:145px;height:172px;background:#6a7080"></div><div style="left:1772px;top:308px;width:143px;height:26px;background:linear-gradient(#ffffff 0px,#eef1f8 11px,#d6ddec 12px,#cdd5e8 26px)"></div><svg style="left:1778px;top:313px" width="17" height="17" viewBox="0 0 17 17"><path d="M1 1H6L8 3V16H1Z" fill="#e8b840" stroke="#c89830" stroke-width=".6"/><path d="M3 3L9 1H10V15L3 17Z" fill="url(#gFolder)" stroke="#d0a030" stroke-width=".6"/><path d="M15 8Q15 14 9 14V12L5 15L9 17V16Q17 16 17 8Z" fill="#40c040" stroke="#208020" stroke-width=".5"/></svg><svg style="left:1802px;top:313px;" width="16" height="16" viewBox="0 0 16 16"><path d="M.5 .5H15.5V15.5H2.5L.5 13.5Z" fill="url(#gBlue)" stroke="#30509a"/><rect x="3" y="1" width="10" height="5" fill="#e8e8e8"/><rect x="4" y="9" width="8" height="7" fill="#e0e0e0"/><rect x="6" y="11" width="3" height="4" fill="#3050a0"/></svg><svg style="left:1825px;top:313px" width="17" height="17" viewBox="0 0 17 17"><path d="M.5 .5H8.5L11.5 3.5V16.5H.5Z" fill="url(#gPage)" stroke="#707070"/><path d="M8 8H11V11H14V14H11V17H8V14H5V11H8Z" fill="#40c040" stroke="#208a20" stroke-width=".7"/></svg><svg style="left:1848px;top:313px" width="17" height="17" viewBox="0 0 17 17"><path d="M.5 .5H8.5L11.5 3.5V16.5H.5Z" fill="url(#gPage)" stroke="#707070"/><path d="M6 9L8 7.5L10 10L12 7.5L14 9L11.5 12L14 15L12 16.5L10 14L8 16.5L6 15L8.5 12Z" fill="#e03020"/></svg><svg style="left:1871px;top:313px" width="15" height="15" viewBox="0 0 15 15"><defs><linearGradient id="gPal1" x1="0" x2="1"><stop offset="0" stop-color="#4040f0"/><stop offset=".5" stop-color="#e040e0"/><stop offset="1" stop-color="#f04040"/></linearGradient><linearGradient id="gPal2" x1="0" x2="1"><stop offset="0" stop-color="#a0b0f0"/><stop offset="1" stop-color="#5070e0"/></linearGradient><linearGradient id="gPal3" x1="0" x2="1"><stop offset="0" stop-color="#ffffff"/><stop offset="1" stop-color="#303030"/></linearGradient></defs><rect x=".5" y=".5" width="14" height="3" fill="url(#gPal1)" stroke="#404040" stroke-width=".6"/><rect x=".5" y="5.5" width="14" height="3" fill="url(#gPal2)" stroke="#404040" stroke-width=".6"/><rect x=".5" y="10.5" width="14" height="3" fill="url(#gPal3)" stroke="#404040" stroke-width=".6"/></svg><svg style="left:1894px;top:313px" width="15" height="15" viewBox="0 0 15 15"><circle cx="7.5" cy="7.5" r="6.8" fill="#f4f0fc" stroke="#8a8a9a"/><path d="M6 4L10.5 7.5L6 11Z" fill="#7a7a8a"/></svg><svg style="left:1771px;top:334px" width="145" height="145" viewBox="0 0 145 145"><rect width="145" height="145" fill="#7c7c84"/><rect x="1" y="1" width="8" height="8" fill="#000000"/><rect x="1" y="10" width="8" height="8" fill="#1c1c1c"/><rect x="1" y="19" width="8" height="8" fill="#3a0800"/><rect x="1" y="28" width="8" height="8" fill="#3a1800"/><rect x="1" y="37" width="8" height="8" fill="#382800"/><rect x="1" y="46" width="8" height="8" fill="#303800"/><rect x="1" y="55" width="8" height="8" fill="#183800"/><rect x="1" y="64" width="8" height="8" fill="#103800"/><rect x="1" y="73" width="8" height="8" fill="#103810"/><rect x="1" y="82" width="8" height="8" fill="#184028"/><rect x="1" y="91" width="8" height="8" fill="#183838"/><rect x="1" y="100" width="8" height="8" fill="#102038"/><rect x="1" y="109" width="8" height="8" fill="#101040"/><rect x="1" y="118" width="8" height="8" fill="#080040"/><rect x="1" y="127" width="8" height="8" fill="#200040"/><rect x="1" y="136" width="8" height="8" fill="#300038"/><rect x="10" y="1" width="8" height="8" fill="#7c2000"/><rect x="10" y="10" width="8" height="8" fill="#2a2a2a"/><rect x="10" y="19" width="8" height="8" fill="#531002"/><rect x="10" y="28" width="8" height="8" fill="#532202"/><rect x="10" y="37" width="8" height="8" fill="#523b05"/><rect x="10" y="46" width="8" height="8" fill="#4a5205"/><rect x="10" y="55" width="8" height="8" fill="#275205"/><rect x="10" y="64" width="8" height="8" fill="#1e5205"/><rect x="10" y="73" width="8" height="8" fill="#1e5217"/><rect x="10" y="82" width="8" height="8" fill="#27593b"/><rect x="10" y="91" width="8" height="8" fill="#275353"/><rect x="10" y="100" width="8" height="8" fill="#1b3353"/><rect x="10" y="109" width="8" height="8" fill="#17195a"/><rect x="10" y="118" width="8" height="8" fill="#0e055a"/><rect x="10" y="127" width="8" height="8" fill="#30075a"/><rect x="10" y="136" width="8" height="8" fill="#490952"/><rect x="19" y="1" width="8" height="8" fill="#2a7c10"/><rect x="19" y="10" width="8" height="8" fill="#383838"/><rect x="19" y="19" width="8" height="8" fill="#6c1805"/><rect x="19" y="28" width="8" height="8" fill="#6c2d05"/><rect x="19" y="37" width="8" height="8" fill="#6d4f09"/><rect x="19" y="46" width="8" height="8" fill="#656d09"/><rect x="19" y="55" width="8" height="8" fill="#366d09"/><rect x="19" y="64" width="8" height="8" fill="#2b6d09"/><rect x="19" y="73" width="8" height="8" fill="#2b6d1e"/><rect x="19" y="82" width="8" height="8" fill="#36724f"/><rect x="19" y="91" width="8" height="8" fill="#366f6f"/><rect x="19" y="100" width="8" height="8" fill="#27476f"/><rect x="19" y="109" width="8" height="8" fill="#1e2275"/><rect x="19" y="118" width="8" height="8" fill="#130975"/><rect x="19" y="127" width="8" height="8" fill="#400e75"/><rect x="19" y="136" width="8" height="8" fill="#62126d"/><rect x="28" y="1" width="8" height="8" fill="#7c7a10"/><rect x="28" y="10" width="8" height="8" fill="#464646"/><rect x="28" y="19" width="8" height="8" fill="#852007"/><rect x="28" y="28" width="8" height="8" fill="#853707"/><rect x="28" y="37" width="8" height="8" fill="#87620e"/><rect x="28" y="46" width="8" height="8" fill="#7f870e"/><rect x="28" y="55" width="8" height="8" fill="#45870e"/><rect x="28" y="64" width="8" height="8" fill="#39870e"/><rect x="28" y="73" width="8" height="8" fill="#398725"/><rect x="28" y="82" width="8" height="8" fill="#458b62"/><rect x="28" y="91" width="8" height="8" fill="#458a8a"/><rect x="28" y="100" width="8" height="8" fill="#325a8a"/><rect x="28" y="109" width="8" height="8" fill="#252b8f"/><rect x="28" y="118" width="8" height="8" fill="#190e8f"/><rect x="28" y="127" width="8" height="8" fill="#50158f"/><rect x="28" y="136" width="8" height="8" fill="#7b1b87"/><rect x="37" y="1" width="8" height="8" fill="#1c1080"/><rect x="37" y="10" width="8" height="8" fill="#545454"/><rect x="37" y="19" width="8" height="8" fill="#9d2809"/><rect x="37" y="28" width="8" height="8" fill="#9d4109"/><rect x="37" y="37" width="8" height="8" fill="#a17612"/><rect x="37" y="46" width="8" height="8" fill="#99a112"/><rect x="37" y="55" width="8" height="8" fill="#53a112"/><rect x="37" y="64" width="8" height="8" fill="#47a112"/><rect x="37" y="73" width="8" height="8" fill="#47a12b"/><rect x="37" y="82" width="8" height="8" fill="#53a576"/><rect x="37" y="91" width="8" height="8" fill="#53a6a6"/><rect x="37" y="100" width="8" height="8" fill="#3e6ea6"/><rect x="37" y="109" width="8" height="8" fill="#2b35a9"/><rect x="37" y="118" width="8" height="8" fill="#1f12a9"/><rect x="37" y="127" width="8" height="8" fill="#601ba9"/><rect x="37" y="136" width="8" height="8" fill="#9525a1"/><rect x="46" y="1" width="8" height="8" fill="#7c1a84"/><rect x="46" y="10" width="8" height="8" fill="#626262"/><rect x="46" y="19" width="8" height="8" fill="#b6300b"/><rect x="46" y="28" width="8" height="8" fill="#b64b0b"/><rect x="46" y="37" width="8" height="8" fill="#bb8917"/><rect x="46" y="46" width="8" height="8" fill="#b3bb17"/><rect x="46" y="55" width="8" height="8" fill="#62bb17"/><rect x="46" y="64" width="8" height="8" fill="#55bb17"/><rect x="46" y="73" width="8" height="8" fill="#55bb32"/><rect x="46" y="82" width="8" height="8" fill="#62be89"/><rect x="46" y="91" width="8" height="8" fill="#62c1c1"/><rect x="46" y="100" width="8" height="8" fill="#4981c1"/><rect x="46" y="109" width="8" height="8" fill="#323ec3"/><rect x="46" y="118" width="8" height="8" fill="#2517c3"/><rect x="46" y="127" width="8" height="8" fill="#7022c3"/><rect x="46" y="136" width="8" height="8" fill="#ae2ebb"/><rect x="55" y="1" width="8" height="8" fill="#2a7a7a"/><rect x="55" y="10" width="8" height="8" fill="#707070"/><rect x="55" y="19" width="8" height="8" fill="#cf380e"/><rect x="55" y="28" width="8" height="8" fill="#cf560e"/><rect x="55" y="37" width="8" height="8" fill="#d69d1b"/><rect x="55" y="46" width="8" height="8" fill="#ced61b"/><rect x="55" y="55" width="8" height="8" fill="#71d61b"/><rect x="55" y="64" width="8" height="8" fill="#62d61b"/><rect x="55" y="73" width="8" height="8" fill="#62d639"/><rect x="55" y="82" width="8" height="8" fill="#71d79d"/><rect x="55" y="91" width="8" height="8" fill="#71dddd"/><rect x="55" y="100" width="8" height="8" fill="#5595dd"/><rect x="55" y="109" width="8" height="8" fill="#3947de"/><rect x="55" y="118" width="8" height="8" fill="#2a1bde"/><rect x="55" y="127" width="8" height="8" fill="#8029de"/><rect x="55" y="136" width="8" height="8" fill="#c737d6"/><rect x="64" y="1" width="8" height="8" fill="#c4c4c4"/><rect x="64" y="10" width="8" height="8" fill="#7e7e7e"/><rect x="64" y="19" width="8" height="8" fill="#e84010"/><rect x="64" y="28" width="8" height="8" fill="#e86010"/><rect x="64" y="37" width="8" height="8" fill="#f0b020"/><rect x="64" y="46" width="8" height="8" fill="#e8f020"/><rect x="64" y="55" width="8" height="8" fill="#80f020"/><rect x="64" y="64" width="8" height="8" fill="#70f020"/><rect x="64" y="73" width="8" height="8" fill="#70f040"/><rect x="64" y="82" width="8" height="8" fill="#80f0b0"/><rect x="64" y="91" width="8" height="8" fill="#80f8f8"/><rect x="64" y="100" width="8" height="8" fill="#60a8f8"/><rect x="64" y="109" width="8" height="8" fill="#4050f8"/><rect x="64" y="118" width="8" height="8" fill="#3020f8"/><rect x="64" y="127" width="8" height="8" fill="#9030f8"/><rect x="64" y="136" width="8" height="8" fill="#e040f0"/><rect x="73" y="1" width="8" height="8" fill="#808080"/><rect x="73" y="10" width="8" height="8" fill="#8d8d8d"/><rect x="73" y="19" width="8" height="8" fill="#ea552b"/><rect x="73" y="28" width="8" height="8" fill="#eb722b"/><rect x="73" y="37" width="8" height="8" fill="#f2b939"/><rect x="73" y="46" width="8" height="8" fill="#ebf23a"/><rect x="73" y="55" width="8" height="8" fill="#8ff239"/><rect x="73" y="64" width="8" height="8" fill="#80f239"/><rect x="73" y="73" width="8" height="8" fill="#80f256"/><rect x="73" y="82" width="8" height="8" fill="#8df2b9"/><rect x="73" y="91" width="8" height="8" fill="#8df9f9"/><rect x="73" y="100" width="8" height="8" fill="#71b2f9"/><rect x="73" y="109" width="8" height="8" fill="#5564f9"/><rect x="73" y="118" width="8" height="8" fill="#4839f9"/><rect x="73" y="127" width="8" height="8" fill="#9d47f9"/><rect x="73" y="136" width="8" height="8" fill="#e455f2"/><rect x="82" y="1" width="8" height="8" fill="#f03800"/><rect x="82" y="10" width="8" height="8" fill="#9b9b9b"/><rect x="82" y="19" width="8" height="8" fill="#ec6945"/><rect x="82" y="28" width="8" height="8" fill="#ed8446"/><rect x="82" y="37" width="8" height="8" fill="#f4c252"/><rect x="82" y="46" width="8" height="8" fill="#eef454"/><rect x="82" y="55" width="8" height="8" fill="#9df452"/><rect x="82" y="64" width="8" height="8" fill="#8ff452"/><rect x="82" y="73" width="8" height="8" fill="#8ff46b"/><rect x="82" y="82" width="8" height="8" fill="#9af4c1"/><rect x="82" y="91" width="8" height="8" fill="#9afafa"/><rect x="82" y="100" width="8" height="8" fill="#82bcfa"/><rect x="82" y="109" width="8" height="8" fill="#6a77fa"/><rect x="82" y="118" width="8" height="8" fill="#5f52fa"/><rect x="82" y="127" width="8" height="8" fill="#a95efa"/><rect x="82" y="136" width="8" height="8" fill="#e76af4"/><rect x="91" y="1" width="8" height="8" fill="#66ff22"/><rect x="91" y="10" width="8" height="8" fill="#a9a9a9"/><rect x="91" y="19" width="8" height="8" fill="#ee7e60"/><rect x="91" y="28" width="8" height="8" fill="#f09661"/><rect x="91" y="37" width="8" height="8" fill="#f6cb6b"/><rect x="91" y="46" width="8" height="8" fill="#f1f66e"/><rect x="91" y="55" width="8" height="8" fill="#acf66b"/><rect x="91" y="64" width="8" height="8" fill="#9ff66b"/><rect x="91" y="73" width="8" height="8" fill="#9ff681"/><rect x="91" y="82" width="8" height="8" fill="#a7f6ca"/><rect x="91" y="91" width="8" height="8" fill="#a7fbfb"/><rect x="91" y="100" width="8" height="8" fill="#93c6fb"/><rect x="91" y="109" width="8" height="8" fill="#7f8bfb"/><rect x="91" y="118" width="8" height="8" fill="#776bfb"/><rect x="91" y="127" width="8" height="8" fill="#b675fb"/><rect x="91" y="136" width="8" height="8" fill="#eb7ff6"/><rect x="100" y="1" width="8" height="8" fill="#ffff18"/><rect x="100" y="10" width="8" height="8" fill="#b7b7b7"/><rect x="100" y="19" width="8" height="8" fill="#f0927a"/><rect x="100" y="28" width="8" height="8" fill="#f2a87c"/><rect x="100" y="37" width="8" height="8" fill="#f8d484"/><rect x="100" y="46" width="8" height="8" fill="#f4f888"/><rect x="100" y="55" width="8" height="8" fill="#baf884"/><rect x="100" y="64" width="8" height="8" fill="#aef884"/><rect x="100" y="73" width="8" height="8" fill="#aef896"/><rect x="100" y="82" width="8" height="8" fill="#b4f8d2"/><rect x="100" y="91" width="8" height="8" fill="#b4fcfc"/><rect x="100" y="100" width="8" height="8" fill="#a4d0fc"/><rect x="100" y="109" width="8" height="8" fill="#949efc"/><rect x="100" y="118" width="8" height="8" fill="#8e84fc"/><rect x="100" y="127" width="8" height="8" fill="#c28cfc"/><rect x="100" y="136" width="8" height="8" fill="#ee94f8"/><rect x="109" y="1" width="8" height="8" fill="#3020ff"/><rect x="109" y="10" width="8" height="8" fill="#c5c5c5"/><rect x="109" y="19" width="8" height="8" fill="#f2a795"/><rect x="109" y="28" width="8" height="8" fill="#f5ba97"/><rect x="109" y="37" width="8" height="8" fill="#f9dd9d"/><rect x="109" y="46" width="8" height="8" fill="#f6f9a2"/><rect x="109" y="55" width="8" height="8" fill="#c9f99d"/><rect x="109" y="64" width="8" height="8" fill="#bef99d"/><rect x="109" y="73" width="8" height="8" fill="#bef9ac"/><rect x="109" y="82" width="8" height="8" fill="#c1f9db"/><rect x="109" y="91" width="8" height="8" fill="#c1fcfc"/><rect x="109" y="100" width="8" height="8" fill="#b5dafc"/><rect x="109" y="109" width="8" height="8" fill="#a9b2fc"/><rect x="109" y="118" width="8" height="8" fill="#a69dfc"/><rect x="109" y="127" width="8" height="8" fill="#cfa3fc"/><rect x="109" y="136" width="8" height="8" fill="#f2a9f9"/><rect x="118" y="1" width="8" height="8" fill="#f040ff"/><rect x="118" y="10" width="8" height="8" fill="#d3d3d3"/><rect x="118" y="19" width="8" height="8" fill="#f4bbaf"/><rect x="118" y="28" width="8" height="8" fill="#f7ccb2"/><rect x="118" y="37" width="8" height="8" fill="#fbe6b6"/><rect x="118" y="46" width="8" height="8" fill="#f9fbbc"/><rect x="118" y="55" width="8" height="8" fill="#d7fbb6"/><rect x="118" y="64" width="8" height="8" fill="#cdfbb6"/><rect x="118" y="73" width="8" height="8" fill="#cdfbc1"/><rect x="118" y="82" width="8" height="8" fill="#cefbe3"/><rect x="118" y="91" width="8" height="8" fill="#cefdfd"/><rect x="118" y="100" width="8" height="8" fill="#c6e4fd"/><rect x="118" y="109" width="8" height="8" fill="#bec5fd"/><rect x="118" y="118" width="8" height="8" fill="#bdb6fd"/><rect x="118" y="127" width="8" height="8" fill="#dbbafd"/><rect x="118" y="136" width="8" height="8" fill="#f5befb"/><rect x="127" y="1" width="8" height="8" fill="#80f4ff"/><rect x="127" y="10" width="8" height="8" fill="#e1e1e1"/><rect x="127" y="19" width="8" height="8" fill="#f6d0ca"/><rect x="127" y="28" width="8" height="8" fill="#fadecd"/><rect x="127" y="37" width="8" height="8" fill="#fdefcf"/><rect x="127" y="46" width="8" height="8" fill="#fcfdd6"/><rect x="127" y="55" width="8" height="8" fill="#e6fdcf"/><rect x="127" y="64" width="8" height="8" fill="#ddfdcf"/><rect x="127" y="73" width="8" height="8" fill="#ddfdd7"/><rect x="127" y="82" width="8" height="8" fill="#dbfdec"/><rect x="127" y="91" width="8" height="8" fill="#dbfefe"/><rect x="127" y="100" width="8" height="8" fill="#d7eefe"/><rect x="127" y="109" width="8" height="8" fill="#d3d9fe"/><rect x="127" y="118" width="8" height="8" fill="#d5cffe"/><rect x="127" y="127" width="8" height="8" fill="#e8d1fe"/><rect x="127" y="136" width="8" height="8" fill="#f9d3fd"/><rect x="136" y="1" width="8" height="8" fill="#ffffff"/><rect x="136" y="10" width="8" height="8" fill="#f0f0f0"/><rect x="136" y="19" width="8" height="8" fill="#f8e4e4"/><rect x="136" y="28" width="8" height="8" fill="#fcf0e8"/><rect x="136" y="37" width="8" height="8" fill="#fff8e8"/><rect x="136" y="46" width="8" height="8" fill="#fffff0"/><rect x="136" y="55" width="8" height="8" fill="#f4ffe8"/><rect x="136" y="64" width="8" height="8" fill="#ecffe8"/><rect x="136" y="73" width="8" height="8" fill="#ecffec"/><rect x="136" y="82" width="8" height="8" fill="#e8fff4"/><rect x="136" y="91" width="8" height="8" fill="#e8ffff"/><rect x="136" y="100" width="8" height="8" fill="#e8f8ff"/><rect x="136" y="109" width="8" height="8" fill="#e8ecff"/><rect x="136" y="118" width="8" height="8" fill="#ece8ff"/><rect x="136" y="127" width="8" height="8" fill="#f4e8ff"/><rect x="136" y="136" width="8" height="8" fill="#fce8ff"/><g fill="none" stroke="rgba(0,0,0,.18)"><rect x="1.5" y="1.5" width="7" height="7"/><rect x="10.5" y="1.5" width="7" height="7"/><rect x="19.5" y="1.5" width="7" height="7"/><rect x="28.5" y="1.5" width="7" height="7"/><rect x="37.5" y="1.5" width="7" height="7"/><rect x="46.5" y="1.5" width="7" height="7"/><rect x="55.5" y="1.5" width="7" height="7"/><rect x="64.5" y="1.5" width="7" height="7"/><rect x="73.5" y="1.5" width="7" height="7"/><rect x="82.5" y="1.5" width="7" height="7"/><rect x="91.5" y="1.5" width="7" height="7"/><rect x="100.5" y="1.5" width="7" height="7"/><rect x="109.5" y="1.5" width="7" height="7"/><rect x="118.5" y="1.5" width="7" height="7"/><rect x="127.5" y="1.5" width="7" height="7"/><rect x="136.5" y="1.5" width="7" height="7"/><rect x="1.5" y="10.5" width="7" height="7"/><rect x="10.5" y="10.5" width="7" height="7"/><rect x="19.5" y="10.5" width="7" height="7"/><rect x="28.5" y="10.5" width="7" height="7"/><rect x="37.5" y="10.5" width="7" height="7"/><rect x="46.5" y="10.5" width="7" height="7"/><rect x="55.5" y="10.5" width="7" height="7"/><rect x="64.5" y="10.5" width="7" height="7"/><rect x="73.5" y="10.5" width="7" height="7"/><rect x="82.5" y="10.5" width="7" height="7"/><rect x="91.5" y="10.5" width="7" height="7"/><rect x="100.5" y="10.5" width="7" height="7"/><rect x="109.5" y="10.5" width="7" height="7"/><rect x="118.5" y="10.5" width="7" height="7"/><rect x="127.5" y="10.5" width="7" height="7"/><rect x="136.5" y="10.5" width="7" height="7"/><rect x="1.5" y="19.5" width="7" height="7"/><rect x="10.5" y="19.5" width="7" height="7"/><rect x="19.5" y="19.5" width="7" height="7"/><rect x="28.5" y="19.5" width="7" height="7"/><rect x="37.5" y="19.5" width="7" height="7"/><rect x="46.5" y="19.5" width="7" height="7"/><rect x="55.5" y="19.5" width="7" height="7"/><rect x="64.5" y="19.5" width="7" height="7"/><rect x="73.5" y="19.5" width="7" height="7"/><rect x="82.5" y="19.5" width="7" height="7"/><rect x="91.5" y="19.5" width="7" height="7"/><rect x="100.5" y="19.5" width="7" height="7"/><rect x="109.5" y="19.5" width="7" height="7"/><rect x="118.5" y="19.5" width="7" height="7"/><rect x="127.5" y="19.5" width="7" height="7"/><rect x="136.5" y="19.5" width="7" height="7"/><rect x="1.5" y="28.5" width="7" height="7"/><rect x="10.5" y="28.5" width="7" height="7"/><rect x="19.5" y="28.5" width="7" height="7"/><rect x="28.5" y="28.5" width="7" height="7"/><rect x="37.5" y="28.5" width="7" height="7"/><rect x="46.5" y="28.5" width="7" height="7"/><rect x="55.5" y="28.5" width="7" height="7"/><rect x="64.5" y="28.5" width="7" height="7"/><rect x="73.5" y="28.5" width="7" height="7"/><rect x="82.5" y="28.5" width="7" height="7"/><rect x="91.5" y="28.5" width="7" height="7"/><rect x="100.5" y="28.5" width="7" height="7"/><rect x="109.5" y="28.5" width="7" height="7"/><rect x="118.5" y="28.5" width="7" height="7"/><rect x="127.5" y="28.5" width="7" height="7"/><rect x="136.5" y="28.5" width="7" height="7"/><rect x="1.5" y="37.5" width="7" height="7"/><rect x="10.5" y="37.5" width="7" height="7"/><rect x="19.5" y="37.5" width="7" height="7"/><rect x="28.5" y="37.5" width="7" height="7"/><rect x="37.5" y="37.5" width="7" height="7"/><rect x="46.5" y="37.5" width="7" height="7"/><rect x="55.5" y="37.5" width="7" height="7"/><rect x="64.5" y="37.5" width="7" height="7"/><rect x="73.5" y="37.5" width="7" height="7"/><rect x="82.5" y="37.5" width="7" height="7"/><rect x="91.5" y="37.5" width="7" height="7"/><rect x="100.5" y="37.5" width="7" height="7"/><rect x="109.5" y="37.5" width="7" height="7"/><rect x="118.5" y="37.5" width="7" height="7"/><rect x="127.5" y="37.5" width="7" height="7"/><rect x="136.5" y="37.5" width="7" height="7"/><rect x="1.5" y="46.5" width="7" height="7"/><rect x="10.5" y="46.5" width="7" height="7"/><rect x="19.5" y="46.5" width="7" height="7"/><rect x="28.5" y="46.5" width="7" height="7"/><rect x="37.5" y="46.5" width="7" height="7"/><rect x="46.5" y="46.5" width="7" height="7"/><rect x="55.5" y="46.5" width="7" height="7"/><rect x="64.5" y="46.5" width="7" height="7"/><rect x="73.5" y="46.5" width="7" height="7"/><rect x="82.5" y="46.5" width="7" height="7"/><rect x="91.5" y="46.5" width="7" height="7"/><rect x="100.5" y="46.5" width="7" height="7"/><rect x="109.5" y="46.5" width="7" height="7"/><rect x="118.5" y="46.5" width="7" height="7"/><rect x="127.5" y="46.5" width="7" height="7"/><rect x="136.5" y="46.5" width="7" height="7"/><rect x="1.5" y="55.5" width="7" height="7"/><rect x="10.5" y="55.5" width="7" height="7"/><rect x="19.5" y="55.5" width="7" height="7"/><rect x="28.5" y="55.5" width="7" height="7"/><rect x="37.5" y="55.5" width="7" height="7"/><rect x="46.5" y="55.5" width="7" height="7"/><rect x="55.5" y="55.5" width="7" height="7"/><rect x="64.5" y="55.5" width="7" height="7"/><rect x="73.5" y="55.5" width="7" height="7"/><rect x="82.5" y="55.5" width="7" height="7"/><rect x="91.5" y="55.5" width="7" height="7"/><rect x="100.5" y="55.5" width="7" height="7"/><rect x="109.5" y="55.5" width="7" height="7"/><rect x="118.5" y="55.5" width="7" height="7"/><rect x="127.5" y="55.5" width="7" height="7"/><rect x="136.5" y="55.5" width="7" height="7"/><rect x="1.5" y="64.5" width="7" height="7"/><rect x="10.5" y="64.5" width="7" height="7"/><rect x="19.5" y="64.5" width="7" height="7"/><rect x="28.5" y="64.5" width="7" height="7"/><rect x="37.5" y="64.5" width="7" height="7"/><rect x="46.5" y="64.5" width="7" height="7"/><rect x="55.5" y="64.5" width="7" height="7"/><rect x="64.5" y="64.5" width="7" height="7"/><rect x="73.5" y="64.5" width="7" height="7"/><rect x="82.5" y="64.5" width="7" height="7"/><rect x="91.5" y="64.5" width="7" height="7"/><rect x="100.5" y="64.5" width="7" height="7"/><rect x="109.5" y="64.5" width="7" height="7"/><rect x="118.5" y="64.5" width="7" height="7"/><rect x="127.5" y="64.5" width="7" height="7"/><rect x="136.5" y="64.5" width="7" height="7"/><rect x="1.5" y="73.5" width="7" height="7"/><rect x="10.5" y="73.5" width="7" height="7"/><rect x="19.5" y="73.5" width="7" height="7"/><rect x="28.5" y="73.5" width="7" height="7"/><rect x="37.5" y="73.5" width="7" height="7"/><rect x="46.5" y="73.5" width="7" height="7"/><rect x="55.5" y="73.5" width="7" height="7"/><rect x="64.5" y="73.5" width="7" height="7"/><rect x="73.5" y="73.5" width="7" height="7"/><rect x="82.5" y="73.5" width="7" height="7"/><rect x="91.5" y="73.5" width="7" height="7"/><rect x="100.5" y="73.5" width="7" height="7"/><rect x="109.5" y="73.5" width="7" height="7"/><rect x="118.5" y="73.5" width="7" height="7"/><rect x="127.5" y="73.5" width="7" height="7"/><rect x="136.5" y="73.5" width="7" height="7"/><rect x="1.5" y="82.5" width="7" height="7"/><rect x="10.5" y="82.5" width="7" height="7"/><rect x="19.5" y="82.5" width="7" height="7"/><rect x="28.5" y="82.5" width="7" height="7"/><rect x="37.5" y="82.5" width="7" height="7"/><rect x="46.5" y="82.5" width="7" height="7"/><rect x="55.5" y="82.5" width="7" height="7"/><rect x="64.5" y="82.5" width="7" height="7"/><rect x="73.5" y="82.5" width="7" height="7"/><rect x="82.5" y="82.5" width="7" height="7"/><rect x="91.5" y="82.5" width="7" height="7"/><rect x="100.5" y="82.5" width="7" height="7"/><rect x="109.5" y="82.5" width="7" height="7"/><rect x="118.5" y="82.5" width="7" height="7"/><rect x="127.5" y="82.5" width="7" height="7"/><rect x="136.5" y="82.5" width="7" height="7"/><rect x="1.5" y="91.5" width="7" height="7"/><rect x="10.5" y="91.5" width="7" height="7"/><rect x="19.5" y="91.5" width="7" height="7"/><rect x="28.5" y="91.5" width="7" height="7"/><rect x="37.5" y="91.5" width="7" height="7"/><rect x="46.5" y="91.5" width="7" height="7"/><rect x="55.5" y="91.5" width="7" height="7"/><rect x="64.5" y="91.5" width="7" height="7"/><rect x="73.5" y="91.5" width="7" height="7"/><rect x="82.5" y="91.5" width="7" height="7"/><rect x="91.5" y="91.5" width="7" height="7"/><rect x="100.5" y="91.5" width="7" height="7"/><rect x="109.5" y="91.5" width="7" height="7"/><rect x="118.5" y="91.5" width="7" height="7"/><rect x="127.5" y="91.5" width="7" height="7"/><rect x="136.5" y="91.5" width="7" height="7"/><rect x="1.5" y="100.5" width="7" height="7"/><rect x="10.5" y="100.5" width="7" height="7"/><rect x="19.5" y="100.5" width="7" height="7"/><rect x="28.5" y="100.5" width="7" height="7"/><rect x="37.5" y="100.5" width="7" height="7"/><rect x="46.5" y="100.5" width="7" height="7"/><rect x="55.5" y="100.5" width="7" height="7"/><rect x="64.5" y="100.5" width="7" height="7"/><rect x="73.5" y="100.5" width="7" height="7"/><rect x="82.5" y="100.5" width="7" height="7"/><rect x="91.5" y="100.5" width="7" height="7"/><rect x="100.5" y="100.5" width="7" height="7"/><rect x="109.5" y="100.5" width="7" height="7"/><rect x="118.5" y="100.5" width="7" height="7"/><rect x="127.5" y="100.5" width="7" height="7"/><rect x="136.5" y="100.5" width="7" height="7"/><rect x="1.5" y="109.5" width="7" height="7"/><rect x="10.5" y="109.5" width="7" height="7"/><rect x="19.5" y="109.5" width="7" height="7"/><rect x="28.5" y="109.5" width="7" height="7"/><rect x="37.5" y="109.5" width="7" height="7"/><rect x="46.5" y="109.5" width="7" height="7"/><rect x="55.5" y="109.5" width="7" height="7"/><rect x="64.5" y="109.5" width="7" height="7"/><rect x="73.5" y="109.5" width="7" height="7"/><rect x="82.5" y="109.5" width="7" height="7"/><rect x="91.5" y="109.5" width="7" height="7"/><rect x="100.5" y="109.5" width="7" height="7"/><rect x="109.5" y="109.5" width="7" height="7"/><rect x="118.5" y="109.5" width="7" height="7"/><rect x="127.5" y="109.5" width="7" height="7"/><rect x="136.5" y="109.5" width="7" height="7"/><rect x="1.5" y="118.5" width="7" height="7"/><rect x="10.5" y="118.5" width="7" height="7"/><rect x="19.5" y="118.5" width="7" height="7"/><rect x="28.5" y="118.5" width="7" height="7"/><rect x="37.5" y="118.5" width="7" height="7"/><rect x="46.5" y="118.5" width="7" height="7"/><rect x="55.5" y="118.5" width="7" height="7"/><rect x="64.5" y="118.5" width="7" height="7"/><rect x="73.5" y="118.5" width="7" height="7"/><rect x="82.5" y="118.5" width="7" height="7"/><rect x="91.5" y="118.5" width="7" height="7"/><rect x="100.5" y="118.5" width="7" height="7"/><rect x="109.5" y="118.5" width="7" height="7"/><rect x="118.5" y="118.5" width="7" height="7"/><rect x="127.5" y="118.5" width="7" height="7"/><rect x="136.5" y="118.5" width="7" height="7"/><rect x="1.5" y="127.5" width="7" height="7"/><rect x="10.5" y="127.5" width="7" height="7"/><rect x="19.5" y="127.5" width="7" height="7"/><rect x="28.5" y="127.5" width="7" height="7"/><rect x="37.5" y="127.5" width="7" height="7"/><rect x="46.5" y="127.5" width="7" height="7"/><rect x="55.5" y="127.5" width="7" height="7"/><rect x="64.5" y="127.5" width="7" height="7"/><rect x="73.5" y="127.5" width="7" height="7"/><rect x="82.5" y="127.5" width="7" height="7"/><rect x="91.5" y="127.5" width="7" height="7"/><rect x="100.5" y="127.5" width="7" height="7"/><rect x="109.5" y="127.5" width="7" height="7"/><rect x="118.5" y="127.5" width="7" height="7"/><rect x="127.5" y="127.5" width="7" height="7"/><rect x="136.5" y="127.5" width="7" height="7"/><rect x="1.5" y="136.5" width="7" height="7"/><rect x="10.5" y="136.5" width="7" height="7"/><rect x="19.5" y="136.5" width="7" height="7"/><rect x="28.5" y="136.5" width="7" height="7"/><rect x="37.5" y="136.5" width="7" height="7"/><rect x="46.5" y="136.5" width="7" height="7"/><rect x="55.5" y="136.5" width="7" height="7"/><rect x="64.5" y="136.5" width="7" height="7"/><rect x="73.5" y="136.5" width="7" height="7"/><rect x="82.5" y="136.5" width="7" height="7"/><rect x="91.5" y="136.5" width="7" height="7"/><rect x="100.5" y="136.5" width="7" height="7"/><rect x="109.5" y="136.5" width="7" height="7"/><rect x="118.5" y="136.5" width="7" height="7"/><rect x="127.5" y="136.5" width="7" height="7"/><rect x="136.5" y="136.5" width="7" height="7"/></g></svg><div style="left:1771px;top:487px;width:118px;height:12px;background:linear-gradient(#2e2e2e 0px,#6a6a6a 2px,#8e8e8e 4px,#909090 11px,#7a7a7a 12px);border-radius:6px"></div><div style="left:1778px;top:488px;font:bold 9.5px/11px 'Liberation Sans';color:#c0c0c0;letter-spacing:.3px">Opacity</div><div style="left:1867px;top:487px;width:22px;height:12px;background:linear-gradient(#6aa8e0,#3a78c0);border-radius:6px;box-shadow:inset 0 0 0 1px rgba(0,0,0,.25)"></div><svg style="left:1867px;top:487px" width="22" height="12" viewBox="0 0 22 12"><path d="M8 3L4.5 6L8 9Z M14 3L17.5 6L14 9Z" fill="rgba(255,255,255,.85)"/><line x1="11" y1="1" x2="11" y2="11" stroke="rgba(255,255,255,.6)"/></svg><div style="left:1771px;top:504px;width:118px;height:12px;background:linear-gradient(#2e2e2e 0px,#6a6a6a 2px,#8e8e8e 4px,#909090 11px,#7a7a7a 12px);border-radius:6px"></div><div style="left:1771px;top:504px;width:22px;height:12px;background:linear-gradient(#f06070,#c82030);border-radius:6px;box-shadow:inset 0 0 0 1px rgba(0,0,0,.25)"></div><svg style="left:1771px;top:504px" width="22" height="12" viewBox="0 0 22 12"><path d="M8 3L4.5 6L8 9Z M14 3L17.5 6L14 9Z" fill="rgba(255,255,255,.85)"/><line x1="11" y1="1" x2="11" y2="11" stroke="rgba(255,255,255,.6)"/></svg><div style="left:1795px;top:505px;font:bold 9.5px/11px 'Liberation Sans';color:#c0c0c0">l</div><div style="left:1771px;top:521px;width:118px;height:12px;background:linear-gradient(#2e2e2e 0px,#6a6a6a 2px,#8e8e8e 4px,#909090 11px,#7a7a7a 12px);border-radius:6px"></div><div style="left:1771px;top:521px;width:22px;height:12px;background:linear-gradient(#80f070,#30b020);border-radius:6px;box-shadow:inset 0 0 0 1px rgba(0,0,0,.25)"></div><svg style="left:1771px;top:521px" width="22" height="12" viewBox="0 0 22 12"><path d="M8 3L4.5 6L8 9Z M14 3L17.5 6L14 9Z" fill="rgba(255,255,255,.85)"/><line x1="11" y1="1" x2="11" y2="11" stroke="rgba(255,255,255,.6)"/></svg><div style="left:1794px;top:522px;font:bold 9.5px/11px 'Liberation Sans';color:#c0c0c0">en</div><div style="left:1771px;top:538px;width:118px;height:12px;background:linear-gradient(#2e2e2e 0px,#6a6a6a 2px,#8e8e8e 4px,#909090 11px,#7a7a7a 12px);border-radius:6px"></div><div style="left:1771px;top:538px;width:22px;height:12px;background:linear-gradient(#5080f0,#1838b0);border-radius:6px;box-shadow:inset 0 0 0 1px rgba(0,0,0,.25)"></div><svg style="left:1771px;top:538px" width="22" height="12" viewBox="0 0 22 12"><path d="M8 3L4.5 6L8 9Z M14 3L17.5 6L14 9Z" fill="rgba(255,255,255,.85)"/><line x1="11" y1="1" x2="11" y2="11" stroke="rgba(255,255,255,.6)"/></svg><div style="left:1794px;top:539px;font:bold 9.5px/11px 'Liberation Sans';color:#c0c0c0">e</div><div style="left:1892px;top:485px;width:24px;height:15px;background:#fff;border:1px solid #8c8c8c;box-sizing:border-box"></div><div style="left:1895.5px;top:487.51px;font-size:11px;line-height:11px;color:#000;font-weight:400;font-family:'Liberation Sans';letter-spacing:0.000px;white-space:pre;">255</div><div style="left:1892px;top:502px;width:24px;height:15px;background:#fff;border:1px solid #8c8c8c;box-sizing:border-box"></div><div style="left:1901px;top:504.51px;font-size:11px;line-height:11px;color:#000;font-weight:400;font-family:'Liberation Sans';letter-spacing:0.000px;white-space:pre;">0</div><div style="left:1892px;top:519px;width:24px;height:15px;background:#fff;border:1px solid #8c8c8c;box-sizing:border-box"></div><div style="left:1901px;top:521.51px;font-size:11px;line-height:11px;color:#000;font-weight:400;font-family:'Liberation Sans';letter-spacing:0.000px;white-space:pre;">0</div><div style="left:1892px;top:536px;width:24px;height:15px;background:#fff;border:1px solid #8c8c8c;box-sizing:border-box"></div><div style="left:1901px;top:538.51px;font-size:11px;line-height:11px;color:#000;font-weight:400;font-family:'Liberation Sans';letter-spacing:0.000px;white-space:pre;">0</div><div style="left:1789px;top:573px;width:32px;height:29px;background-color:#fff;background-image:linear-gradient(45deg,#e8e8e8 25%,transparent 25%,transparent 75%,#e8e8e8 75%),linear-gradient(45deg,#e8e8e8 25%,transparent 25%,transparent 75%,#e8e8e8 75%);background-size:8px 8px;background-position:0 0,4px 4px;border:1px solid #8a8a8a;box-sizing:border-box"></div><div style="left:1773px;top:560px;width:32px;height:29px;background:#000;border:2px solid #6c7078;box-shadow:inset 0 0 0 1px #f0f4fc;box-sizing:border-box"></div><div style="left:1773px;top:592px;width:9px;height:8px;background:#000"></div><div style="left:1777px;top:596px;width:9px;height:7px;background:#fff;border:1px solid #606060;box-sizing:border-box;z-index:0"></div><div style="left:1773px;top:592px;width:9px;height:8px;background:#000;border:1px solid #000;box-sizing:border-box"></div><svg style="left:1807px;top:560px" width="13" height="12" viewBox="0 0 13 12"><path d="M1.5 3H8Q11 3 11 6V10" fill="none" stroke="#505560" stroke-width="1.1"/><path d="M0 3L3 .5V5.5Z M11 12L8.5 9H13.5Z" fill="#505560"/></svg><div style="left:1826px;top:560.24px;font-size:9px;line-height:9px;color:#7a86a0;font-weight:400;font-family:'Liberation Sans';letter-spacing:0.000px;white-space:pre;">R :</div><div style="left:1846px;top:560.24px;font-size:9px;line-height:9px;color:#7a86a0;font-weight:400;font-family:'Liberation Sans';letter-spacing:0.000px;white-space:pre;">0</div><div style="left:1826px;top:569.94px;font-size:9px;line-height:9px;color:#7a86a0;font-weight:400;font-family:'Liberation Sans';letter-spacing:0.000px;white-space:pre;">G :</div><div style="left:1846px;top:569.94px;font-size:9px;line-height:9px;color:#7a86a0;font-weight:400;font-family:'Liberation Sans';letter-spacing:0.000px;white-space:pre;">0</div><div style="left:1826px;top:579.64px;font-size:9px;line-height:9px;color:#7a86a0;font-weight:400;font-family:'Liberation Sans';letter-spacing:0.000px;white-space:pre;">B :</div><div style="left:1846px;top:579.64px;font-size:9px;line-height:9px;color:#7a86a0;font-weight:400;font-family:'Liberation Sans';letter-spacing:0.000px;white-space:pre;">0</div><div style="left:1826px;top:589.34px;font-size:9px;line-height:9px;color:#7a86a0;font-weight:400;font-family:'Liberation Sans';letter-spacing:0.000px;white-space:pre;">A :</div><div style="left:1841px;top:589.23px;font-size:10px;line-height:10px;color:#7a86a0;font-weight:400;font-family:'Liberation Sans';letter-spacing:0.000px;white-space:pre;">255</div><div style="left:1874px;top:560.38px;font-size:9.5px;line-height:9.5px;color:#7a86a0;font-weight:400;font-family:'Liberation Sans';letter-spacing:0.700px;white-space:pre;">HTML:</div><div style="left:1865px;top:569px;width:51px;height:15px;background:#fff;border:1px solid #8c8c8c;box-sizing:border-box"></div><div style="left:1868px;top:571.33px;font-size:10px;line-height:10px;color:#000;font-weight:400;font-family:'Liberation Sans';letter-spacing:0.866px;white-space:pre;">#000000</div><svg style="left:1871px;top:587px" width="16" height="15" viewBox="0 0 16 15"><path d="M.5 .5H6.5L8.5 2.5V11.5H.5Z" fill="#e8ecf4" stroke="#9098a8"/><path d="M5.5 3.5H11.5L14.5 6.5V14.5H5.5Z" fill="#fff" stroke="#606878"/><g stroke="#9aa0b0"><line x1="7" y1="8" x2="13" y2="8"/><line x1="7" y1="10" x2="13" y2="10"/><line x1="7" y1="12" x2="13" y2="12"/></g></svg><svg style="left:1893px;top:586px" width="17" height="16" viewBox="0 0 17 16"><rect x=".5" y="1.5" width="10" height="12" rx="1" fill="#d8a840" stroke="#7a5a18"/><rect x="3" y=".5" width="5" height="2.5" fill="#e0e0e0" stroke="#808080" stroke-width=".6"/><path d="M6.5 5.5H12.5L15.5 8.5V15.5H6.5Z" fill="#fff" stroke="#606878"/><g stroke="#9aa0b0"><line x1="8" y1="10" x2="14" y2="10"/><line x1="8" y1="12" x2="14" y2="12"/><line x1="8" y1="14" x2="14" y2="14"/></g></svg><div style="left:1771px;top:614px;width:145px;height:160px;background:#fafcff;border:1px solid #a8bcd8;box-sizing:border-box"></div><div style="left:1774px;top:617px;width:140px;height:155px;background:#e0e0e0"></div><div style="left:1780px;top:623px;width:134px;height:143px;overflow:hidden"><svg style="left:0;top:0" width="134" height="143" viewBox="0 0 134 143"><defs><clipPath id="cpB"><path d="M10.64 -12L92.00 60C98.50 65.5 102 71 102 79C102 89 96 93.7 88 93.9C80 94.1 70 95.5 57.3 99C46 102 33 109 22.3 120C15 127.5 10 135 4 139C2 140.3 0 140.6 -4 140.8L-40 141L-40 -12Z"/></clipPath></defs><path d="M10.64 -12L92.00 60C98.50 65.5 102 71 102 79C102 89 96 93.7 88 93.9C80 94.1 70 95.5 57.3 99C46 102 33 109 22.3 120C15 127.5 10 135 4 139C2 140.3 0 140.6 -4 140.8L-40 141L-40 -12Z" fill="#fff"/><circle cx="126.02" cy="198.22" r="161.68" fill="#80eedc" clip-path="url(#cpB)"/><path d="M10.64 -12L92.00 60C98.50 65.5 102 71 102 79C102 89 96 93.7 88 93.9C80 94.1 70 95.5 57.3 99C46 102 33 109 22.3 120C15 127.5 10 135 4 139C2 140.3 0 140.6 -4 140.8L-40 141L-40 -12Z" fill="none" stroke="#070707" stroke-width="8" stroke-linejoin="round"/></svg></div><div style="left:0px;top:1009px;width:1917px;height:1px;background:#ffffff"></div><div style="left:0px;top:1010px;width:1917px;height:18px;background:#f0f4fc"></div><div style="left:1.5px;top:1015.59px;font-size:12px;line-height:12px;color:#000;font-weight:400;font-family:'Liberation Sans';letter-spacing:-0.084px;white-space:pre;">Copies the selection to the Clipboard</div><div style="left:1208px;top:1015.59px;font-size:12px;line-height:12px;color:#000;font-weight:400;font-family:'Liberation Sans';letter-spacing:0.219px;white-space:pre;">Arrow.png</div><div style="left:1388px;top:1012px;width:1px;height:16px;background:#c8ccd8"></div><div style="left:1476px;top:1012px;width:1px;height:16px;background:#c8ccd8"></div><div style="left:1684px;top:1012px;width:1px;height:16px;background:#c8ccd8"></div><div style="left:1762px;top:1012px;width:1px;height:16px;background:#c8ccd8"></div><div style="left:1840px;top:1012px;width:1px;height:16px;background:#c8ccd8"></div><div style="left:1897px;top:1012px;width:1px;height:16px;background:#c8ccd8"></div><div style="left:1396px;top:1015.59px;font-size:12px;line-height:12px;color:#000;font-weight:400;font-family:'Liberation Sans';letter-spacing:-0.482px;white-space:pre;">4.09 Kb</div><div style="left:1484px;top:1015.59px;font-size:12px;line-height:12px;color:#000;font-weight:400;font-family:'Liberation Sans';letter-spacing:-0.289px;white-space:pre;">256x256 - 32 BPP (Alpha Channel)</div><svg style="left:1689px;top:1013px" width="15" height="14" viewBox="0 0 15 14"><path d="M0 3H3" stroke="#d04020"/><path d="M3 0V3" stroke="#d04020"/><rect x="4.5" y="4.5" width="9" height="9" fill="#e8e8e8" stroke="#505050" stroke-dasharray="1 1"/></svg><div style="left:1706px;top:1015.59px;font-size:12px;line-height:12px;color:#000;font-weight:400;font-family:'Liberation Sans';letter-spacing:-0.469px;white-space:pre;">211,63</div><svg style="left:1766px;top:1013px" width="15" height="14" viewBox="0 0 15 14"><path d="M1 13V3H3" fill="none" stroke="#d04020"/><path d="M11 1H13V3" fill="none" stroke="#d04020"/><rect x="4.5" y="4.5" width="9" height="9" fill="#e8e8e8" stroke="#505050" stroke-dasharray="1 1"/></svg><div style="left:1783px;top:1015.59px;font-size:12px;line-height:12px;color:#000;font-weight:400;font-family:'Liberation Sans';letter-spacing:-0.435px;white-space:pre;">256x256</div><svg style="left:1845px;top:1013px" width="15" height="14" viewBox="0 0 15 14"><line x1="8" y1="8" x2="13" y2="13" stroke="#c89030" stroke-width="2.5" stroke-linecap="round"/><circle cx="5.5" cy="5.5" r="4.3" fill="#d0e4f8" stroke="#4070b0" stroke-width="1.3"/></svg><div style="left:1862px;top:1015.59px;font-size:12px;line-height:12px;color:#000;font-weight:400;font-family:'Liberation Sans';letter-spacing:-0.676px;white-space:pre;">300%</div>
</body></html>
